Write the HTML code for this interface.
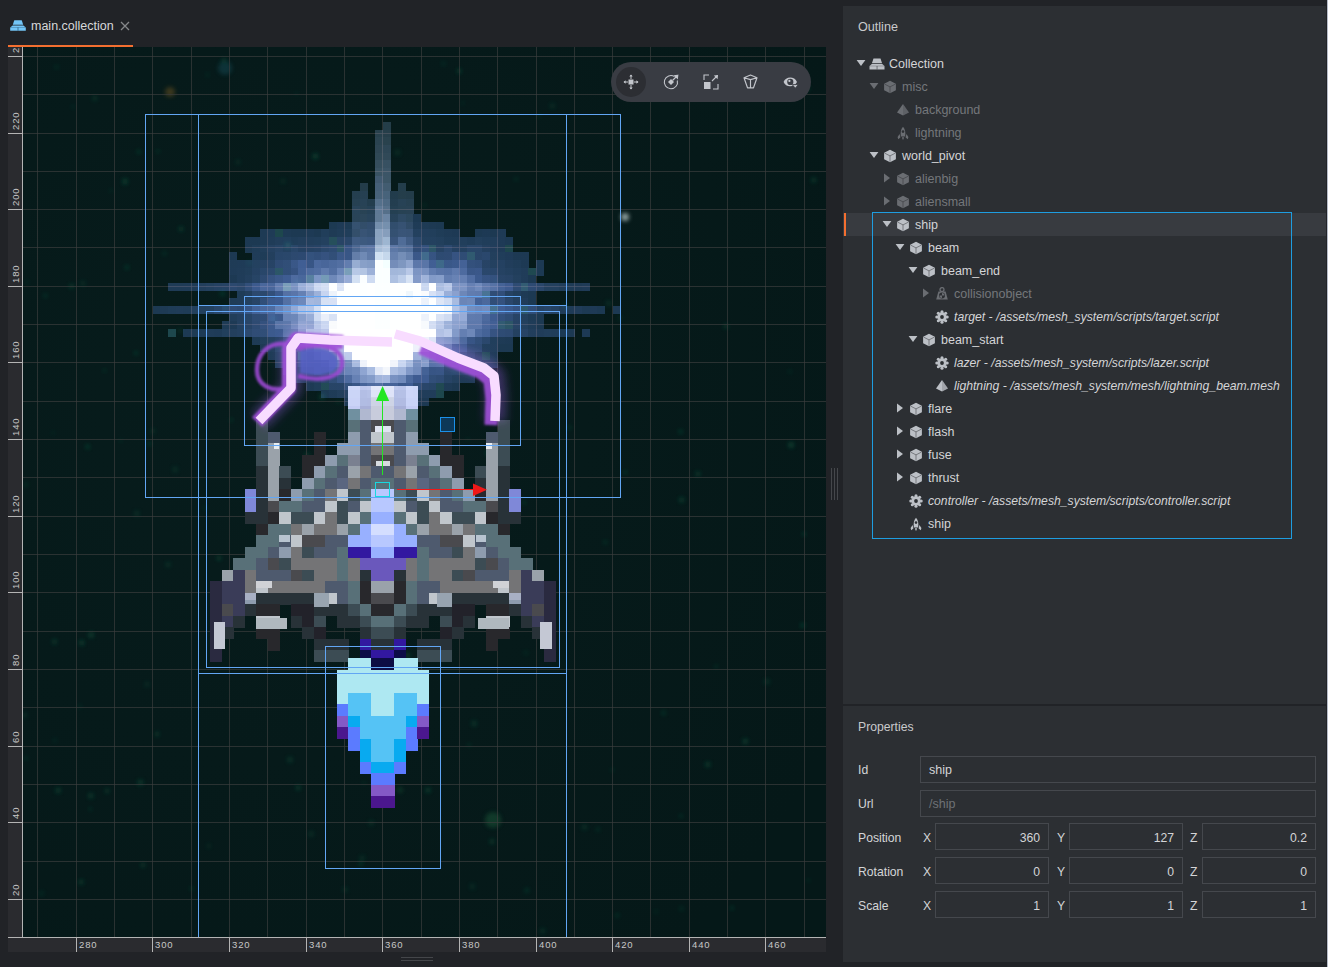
<!DOCTYPE html>
<html><head><meta charset="utf-8"><style>
*{box-sizing:border-box}
body{margin:0;width:1328px;height:967px;background:#212327;position:relative;overflow:hidden;font-family:"Liberation Sans",sans-serif}
.abs{position:absolute}
.t{position:absolute;white-space:nowrap;font-size:12.2px;line-height:14px}
</style></head><body>
<svg width="1328" height="967" viewBox="0 0 1328 967" style="position:absolute;left:0;top:0" shape-rendering="crispEdges"><defs><clipPath id="sc"><rect x="23" y="47" width="803" height="890"/></clipPath><radialGradient id="bg1" cx="0.3" cy="0.4" r="0.8"><stop offset="0" stop-color="#071c1c"/><stop offset="1" stop-color="#051818"/></radialGradient><clipPath id="rl"><rect x="8" y="47" width="14" height="890"/></clipPath><clipPath id="rb"><rect x="8" y="937" width="818" height="15"/></clipPath><filter id="blur1" x="-50%" y="-50%" width="200%" height="200%"><feGaussianBlur stdDeviation="1"/></filter><filter id="blur2" x="-50%" y="-50%" width="200%" height="200%"><feGaussianBlur stdDeviation="2"/></filter><filter id="blur4" x="-50%" y="-50%" width="200%" height="200%"><feGaussianBlur stdDeviation="4"/></filter></defs><rect x="8" y="47" width="818" height="905" fill="#2a2b2f"/><g clip-path="url(#sc)"><rect x="23" y="47" width="803" height="890" fill="url(#bg1)"/><circle cx="170" cy="92" r="5" fill="#a07020" opacity="0.35" filter="url(#blur2)" shape-rendering="auto"/><circle cx="225" cy="68" r="7" fill="#1a6070" opacity="0.35" filter="url(#blur2)" shape-rendering="auto"/><circle cx="625" cy="217" r="4" fill="#c8d8d8" opacity="0.7" filter="url(#blur2)" shape-rendering="auto"/><circle cx="493" cy="820" r="8" fill="#1a5a3a" opacity="0.5" filter="url(#blur2)" shape-rendering="auto"/><circle cx="400" cy="790" r="3" fill="#1a5a3a" opacity="0.4" filter="url(#blur2)" shape-rendering="auto"/><circle cx="283.0" cy="181.3" r="2.5" fill="#10503a" opacity="0.33" filter="url(#blur2)" shape-rendering="auto"/><circle cx="453.3" cy="372.5" r="1.6" fill="#10503a" opacity="0.50" filter="url(#blur2)" shape-rendering="auto"/><circle cx="53.1" cy="432.9" r="1.6" fill="#10503a" opacity="0.34" filter="url(#blur2)" shape-rendering="auto"/><circle cx="363.9" cy="782.9" r="1.7" fill="#10503a" opacity="0.39" filter="url(#blur2)" shape-rendering="auto"/><circle cx="526.8" cy="890.5" r="2.4" fill="#10503a" opacity="0.46" filter="url(#blur2)" shape-rendering="auto"/><circle cx="806.9" cy="88.5" r="2.8" fill="#10503a" opacity="0.42" filter="url(#blur2)" shape-rendering="auto"/><circle cx="138.8" cy="151.8" r="2.0" fill="#10503a" opacity="0.63" filter="url(#blur2)" shape-rendering="auto"/><circle cx="168.1" cy="564.6" r="2.5" fill="#10503a" opacity="0.45" filter="url(#blur2)" shape-rendering="auto"/><circle cx="462.8" cy="102.9" r="1.6" fill="#10503a" opacity="0.38" filter="url(#blur2)" shape-rendering="auto"/><circle cx="569.4" cy="427.6" r="2.0" fill="#10503a" opacity="0.53" filter="url(#blur2)" shape-rendering="auto"/><circle cx="386.9" cy="313.8" r="2.7" fill="#10503a" opacity="0.58" filter="url(#blur2)" shape-rendering="auto"/><circle cx="219.0" cy="558.2" r="2.3" fill="#10503a" opacity="0.65" filter="url(#blur2)" shape-rendering="auto"/><circle cx="608.7" cy="303.3" r="3.0" fill="#10503a" opacity="0.35" filter="url(#blur2)" shape-rendering="auto"/><circle cx="358.8" cy="720.9" r="1.7" fill="#10503a" opacity="0.50" filter="url(#blur2)" shape-rendering="auto"/><circle cx="54.5" cy="641.7" r="2.6" fill="#10503a" opacity="0.53" filter="url(#blur2)" shape-rendering="auto"/><circle cx="726.0" cy="326.2" r="2.5" fill="#10503a" opacity="0.54" filter="url(#blur2)" shape-rendering="auto"/><circle cx="488.7" cy="453.0" r="2.8" fill="#10503a" opacity="0.68" filter="url(#blur2)" shape-rendering="auto"/><circle cx="403.7" cy="638.1" r="1.6" fill="#10503a" opacity="0.58" filter="url(#blur2)" shape-rendering="auto"/><circle cx="542.6" cy="930.9" r="2.7" fill="#10503a" opacity="0.41" filter="url(#blur2)" shape-rendering="auto"/><circle cx="332.8" cy="642.1" r="1.5" fill="#10503a" opacity="0.48" filter="url(#blur2)" shape-rendering="auto"/><circle cx="157.9" cy="151.2" r="1.6" fill="#10503a" opacity="0.61" filter="url(#blur2)" shape-rendering="auto"/><circle cx="126.9" cy="267.4" r="2.1" fill="#10503a" opacity="0.65" filter="url(#blur2)" shape-rendering="auto"/><circle cx="87.7" cy="446.8" r="2.3" fill="#10503a" opacity="0.65" filter="url(#blur2)" shape-rendering="auto"/><circle cx="680.9" cy="815.9" r="1.9" fill="#10503a" opacity="0.47" filter="url(#blur2)" shape-rendering="auto"/><circle cx="311.1" cy="833.9" r="2.9" fill="#10503a" opacity="0.36" filter="url(#blur2)" shape-rendering="auto"/><circle cx="164.5" cy="253.4" r="1.9" fill="#10503a" opacity="0.49" filter="url(#blur2)" shape-rendering="auto"/><circle cx="496.1" cy="280.8" r="1.5" fill="#10503a" opacity="0.47" filter="url(#blur2)" shape-rendering="auto"/><circle cx="319.5" cy="551.0" r="2.9" fill="#10503a" opacity="0.58" filter="url(#blur2)" shape-rendering="auto"/><circle cx="436.9" cy="596.7" r="2.5" fill="#10503a" opacity="0.32" filter="url(#blur2)" shape-rendering="auto"/><circle cx="745.3" cy="741.2" r="2.8" fill="#10503a" opacity="0.62" filter="url(#blur2)" shape-rendering="auto"/><circle cx="338.1" cy="402.1" r="1.7" fill="#10503a" opacity="0.55" filter="url(#blur2)" shape-rendering="auto"/><circle cx="73.0" cy="106.9" r="1.8" fill="#10503a" opacity="0.36" filter="url(#blur2)" shape-rendering="auto"/><circle cx="296.1" cy="93.8" r="1.5" fill="#10503a" opacity="0.36" filter="url(#blur2)" shape-rendering="auto"/><circle cx="104.5" cy="370.6" r="1.5" fill="#10503a" opacity="0.65" filter="url(#blur2)" shape-rendering="auto"/><circle cx="516.1" cy="179.2" r="1.9" fill="#10503a" opacity="0.44" filter="url(#blur2)" shape-rendering="auto"/><circle cx="315.4" cy="156.3" r="2.8" fill="#10503a" opacity="0.70" filter="url(#blur2)" shape-rendering="auto"/><circle cx="397.2" cy="477.6" r="1.6" fill="#10503a" opacity="0.34" filter="url(#blur2)" shape-rendering="auto"/><circle cx="298.1" cy="282.6" r="2.7" fill="#10503a" opacity="0.36" filter="url(#blur2)" shape-rendering="auto"/><circle cx="41.5" cy="893.4" r="2.3" fill="#10503a" opacity="0.36" filter="url(#blur2)" shape-rendering="auto"/><circle cx="459.2" cy="71.1" r="2.3" fill="#10503a" opacity="0.69" filter="url(#blur2)" shape-rendering="auto"/><circle cx="716.2" cy="666.6" r="1.9" fill="#10503a" opacity="0.45" filter="url(#blur2)" shape-rendering="auto"/><circle cx="157.1" cy="734.0" r="2.3" fill="#10503a" opacity="0.61" filter="url(#blur2)" shape-rendering="auto"/><circle cx="287.7" cy="245.5" r="2.7" fill="#10503a" opacity="0.69" filter="url(#blur2)" shape-rendering="auto"/><circle cx="707.7" cy="764.4" r="2.7" fill="#10503a" opacity="0.60" filter="url(#blur2)" shape-rendering="auto"/><circle cx="205.1" cy="507.7" r="2.0" fill="#10503a" opacity="0.31" filter="url(#blur2)" shape-rendering="auto"/><circle cx="45.4" cy="295.7" r="1.9" fill="#10503a" opacity="0.58" filter="url(#blur2)" shape-rendering="auto"/><circle cx="791.1" cy="445.0" r="2.9" fill="#10503a" opacity="0.70" filter="url(#blur2)" shape-rendering="auto"/><circle cx="789.9" cy="371.5" r="1.8" fill="#10503a" opacity="0.39" filter="url(#blur2)" shape-rendering="auto"/><circle cx="181.0" cy="228.9" r="2.4" fill="#10503a" opacity="0.66" filter="url(#blur2)" shape-rendering="auto"/><circle cx="697.9" cy="473.7" r="2.5" fill="#10503a" opacity="0.62" filter="url(#blur2)" shape-rendering="auto"/><circle cx="91.1" cy="634.9" r="2.9" fill="#10503a" opacity="0.61" filter="url(#blur2)" shape-rendering="auto"/><circle cx="625.4" cy="472.4" r="1.8" fill="#10503a" opacity="0.62" filter="url(#blur2)" shape-rendering="auto"/><circle cx="290.0" cy="759.7" r="3.0" fill="#10503a" opacity="0.46" filter="url(#blur2)" shape-rendering="auto"/><circle cx="345.3" cy="889.6" r="2.6" fill="#10503a" opacity="0.37" filter="url(#blur2)" shape-rendering="auto"/><circle cx="125.0" cy="181.5" r="2.9" fill="#10503a" opacity="0.62" filter="url(#blur2)" shape-rendering="auto"/><circle cx="140.4" cy="782.6" r="3.0" fill="#10503a" opacity="0.56" filter="url(#blur2)" shape-rendering="auto"/><circle cx="304.4" cy="535.3" r="1.7" fill="#10503a" opacity="0.31" filter="url(#blur2)" shape-rendering="auto"/><circle cx="802.6" cy="625.2" r="2.3" fill="#10503a" opacity="0.67" filter="url(#blur2)" shape-rendering="auto"/><circle cx="371.3" cy="822.9" r="2.7" fill="#10503a" opacity="0.38" filter="url(#blur2)" shape-rendering="auto"/><circle cx="225.2" cy="307.7" r="1.9" fill="#10503a" opacity="0.53" filter="url(#blur2)" shape-rendering="auto"/><circle cx="231.3" cy="419.9" r="1.7" fill="#10503a" opacity="0.66" filter="url(#blur2)" shape-rendering="auto"/><circle cx="307.1" cy="454.8" r="2.4" fill="#10503a" opacity="0.66" filter="url(#blur2)" shape-rendering="auto"/><circle cx="360.8" cy="863.8" r="2.3" fill="#10503a" opacity="0.51" filter="url(#blur2)" shape-rendering="auto"/><circle cx="443.4" cy="63.6" r="2.2" fill="#10503a" opacity="0.37" filter="url(#blur2)" shape-rendering="auto"/><circle cx="26.2" cy="758.3" r="1.8" fill="#10503a" opacity="0.49" filter="url(#blur2)" shape-rendering="auto"/><circle cx="605.3" cy="542.3" r="2.0" fill="#10503a" opacity="0.51" filter="url(#blur2)" shape-rendering="auto"/><circle cx="469.0" cy="745.0" r="1.7" fill="#10503a" opacity="0.52" filter="url(#blur2)" shape-rendering="auto"/><circle cx="222.5" cy="293.5" r="2.7" fill="#10503a" opacity="0.50" filter="url(#blur2)" shape-rendering="auto"/><circle cx="474.1" cy="723.4" r="2.9" fill="#10503a" opacity="0.48" filter="url(#blur2)" shape-rendering="auto"/><circle cx="514.9" cy="496.9" r="2.3" fill="#10503a" opacity="0.58" filter="url(#blur2)" shape-rendering="auto"/><circle cx="386.2" cy="521.6" r="2.2" fill="#10503a" opacity="0.68" filter="url(#blur2)" shape-rendering="auto"/><circle cx="584.5" cy="827.1" r="2.9" fill="#10503a" opacity="0.40" filter="url(#blur2)" shape-rendering="auto"/><circle cx="472.3" cy="886.5" r="2.8" fill="#10503a" opacity="0.35" filter="url(#blur2)" shape-rendering="auto"/><circle cx="120.7" cy="440.5" r="1.6" fill="#10503a" opacity="0.40" filter="url(#blur2)" shape-rendering="auto"/><circle cx="81.7" cy="642.8" r="2.7" fill="#10503a" opacity="0.66" filter="url(#blur2)" shape-rendering="auto"/><circle cx="147.0" cy="684.3" r="2.5" fill="#10503a" opacity="0.36" filter="url(#blur2)" shape-rendering="auto"/><circle cx="731.9" cy="908.1" r="1.8" fill="#10503a" opacity="0.68" filter="url(#blur2)" shape-rendering="auto"/><circle cx="342.8" cy="480.7" r="3.0" fill="#10503a" opacity="0.63" filter="url(#blur2)" shape-rendering="auto"/><circle cx="152.7" cy="431.1" r="2.3" fill="#10503a" opacity="0.44" filter="url(#blur2)" shape-rendering="auto"/><circle cx="180.2" cy="330.5" r="2.6" fill="#10503a" opacity="0.31" filter="url(#blur2)" shape-rendering="auto"/><circle cx="467.9" cy="439.0" r="1.5" fill="#10503a" opacity="0.43" filter="url(#blur2)" shape-rendering="auto"/><circle cx="524.0" cy="502.9" r="1.6" fill="#10503a" opacity="0.69" filter="url(#blur2)" shape-rendering="auto"/><circle cx="656.1" cy="911.8" r="1.7" fill="#10503a" opacity="0.41" filter="url(#blur2)" shape-rendering="auto"/><circle cx="54.8" cy="740.3" r="1.9" fill="#10503a" opacity="0.35" filter="url(#blur2)" shape-rendering="auto"/><circle cx="362.1" cy="858.2" r="2.7" fill="#10503a" opacity="0.40" filter="url(#blur2)" shape-rendering="auto"/><circle cx="142.9" cy="865.1" r="2.4" fill="#10503a" opacity="0.58" filter="url(#blur2)" shape-rendering="auto"/><circle cx="94.8" cy="98.2" r="2.5" fill="#10503a" opacity="0.47" filter="url(#blur2)" shape-rendering="auto"/><circle cx="81.1" cy="882.1" r="2.5" fill="#10503a" opacity="0.62" filter="url(#blur2)" shape-rendering="auto"/><circle cx="90.2" cy="809.0" r="1.6" fill="#10503a" opacity="0.65" filter="url(#blur2)" shape-rendering="auto"/><circle cx="387.4" cy="348.8" r="2.3" fill="#10503a" opacity="0.67" filter="url(#blur2)" shape-rendering="auto"/><circle cx="238.1" cy="162.0" r="2.3" fill="#10503a" opacity="0.40" filter="url(#blur2)" shape-rendering="auto"/><circle cx="110.9" cy="190.7" r="1.6" fill="#10503a" opacity="0.38" filter="url(#blur2)" shape-rendering="auto"/><circle cx="273.5" cy="318.5" r="2.6" fill="#10503a" opacity="0.42" filter="url(#blur2)" shape-rendering="auto"/><circle cx="424.6" cy="205.3" r="2.0" fill="#10503a" opacity="0.31" filter="url(#blur2)" shape-rendering="auto"/><circle cx="224.1" cy="60.7" r="2.6" fill="#10503a" opacity="0.52" filter="url(#blur2)" shape-rendering="auto"/><circle cx="175.1" cy="469.5" r="2.9" fill="#10503a" opacity="0.34" filter="url(#blur2)" shape-rendering="auto"/><circle cx="680.6" cy="431.6" r="2.2" fill="#10503a" opacity="0.63" filter="url(#blur2)" shape-rendering="auto"/><circle cx="338.6" cy="498.0" r="2.5" fill="#10503a" opacity="0.69" filter="url(#blur2)" shape-rendering="auto"/><circle cx="298.2" cy="787.7" r="2.6" fill="#10503a" opacity="0.55" filter="url(#blur2)" shape-rendering="auto"/><circle cx="348.0" cy="356.3" r="1.6" fill="#10503a" opacity="0.35" filter="url(#blur2)" shape-rendering="auto"/><circle cx="79.8" cy="706.4" r="1.9" fill="#10503a" opacity="0.37" filter="url(#blur2)" shape-rendering="auto"/><circle cx="90.8" cy="795.7" r="2.8" fill="#10503a" opacity="0.57" filter="url(#blur2)" shape-rendering="auto"/><circle cx="249.4" cy="262.6" r="1.9" fill="#10503a" opacity="0.48" filter="url(#blur2)" shape-rendering="auto"/><circle cx="149.5" cy="443.8" r="1.9" fill="#10503a" opacity="0.68" filter="url(#blur2)" shape-rendering="auto"/><circle cx="804.0" cy="533.9" r="1.9" fill="#10503a" opacity="0.69" filter="url(#blur2)" shape-rendering="auto"/><circle cx="271.6" cy="364.4" r="1.5" fill="#10503a" opacity="0.45" filter="url(#blur2)" shape-rendering="auto"/><circle cx="404.1" cy="494.5" r="1.8" fill="#10503a" opacity="0.50" filter="url(#blur2)" shape-rendering="auto"/><circle cx="27.0" cy="282.1" r="1.6" fill="#10503a" opacity="0.46" filter="url(#blur2)" shape-rendering="auto"/><circle cx="56.5" cy="67.0" r="2.0" fill="#10503a" opacity="0.39" filter="url(#blur2)" shape-rendering="auto"/><circle cx="493.2" cy="518.0" r="2.6" fill="#10503a" opacity="0.56" filter="url(#blur2)" shape-rendering="auto"/><circle cx="597.9" cy="829.4" r="2.1" fill="#10503a" opacity="0.43" filter="url(#blur2)" shape-rendering="auto"/><circle cx="813.7" cy="180.0" r="2.6" fill="#10503a" opacity="0.56" filter="url(#blur2)" shape-rendering="auto"/><circle cx="58.2" cy="790.4" r="2.8" fill="#10503a" opacity="0.55" filter="url(#blur2)" shape-rendering="auto"/><circle cx="612.3" cy="769.9" r="1.7" fill="#10503a" opacity="0.51" filter="url(#blur2)" shape-rendering="auto"/><circle cx="428.0" cy="790.1" r="2.7" fill="#10503a" opacity="0.63" filter="url(#blur2)" shape-rendering="auto"/><circle cx="492.0" cy="841.6" r="2.5" fill="#10503a" opacity="0.58" filter="url(#blur2)" shape-rendering="auto"/><circle cx="207.6" cy="74.7" r="1.7" fill="#10503a" opacity="0.44" filter="url(#blur2)" shape-rendering="auto"/><circle cx="107.2" cy="790.9" r="2.3" fill="#10503a" opacity="0.55" filter="url(#blur2)" shape-rendering="auto"/><circle cx="525.9" cy="652.8" r="2.2" fill="#10503a" opacity="0.30" filter="url(#blur2)" shape-rendering="auto"/><circle cx="663.6" cy="713.0" r="2.3" fill="#10503a" opacity="0.51" filter="url(#blur2)" shape-rendering="auto"/><circle cx="552.4" cy="105.8" r="2.6" fill="#10503a" opacity="0.40" filter="url(#blur2)" shape-rendering="auto"/><circle cx="82.8" cy="283.3" r="2.6" fill="#10503a" opacity="0.38" filter="url(#blur2)" shape-rendering="auto"/><circle cx="617.1" cy="915.4" r="2.2" fill="#10503a" opacity="0.45" filter="url(#blur2)" shape-rendering="auto"/><circle cx="407.6" cy="655.5" r="2.7" fill="#10503a" opacity="0.55" filter="url(#blur2)" shape-rendering="auto"/><circle cx="539.1" cy="115.9" r="1.7" fill="#10503a" opacity="0.40" filter="url(#blur2)" shape-rendering="auto"/><circle cx="619.8" cy="317.9" r="2.4" fill="#10503a" opacity="0.30" filter="url(#blur2)" shape-rendering="auto"/><circle cx="71.7" cy="286.2" r="2.5" fill="#10503a" opacity="0.58" filter="url(#blur2)" shape-rendering="auto"/><circle cx="565.6" cy="305.9" r="2.3" fill="#10503a" opacity="0.49" filter="url(#blur2)" shape-rendering="auto"/><circle cx="397.5" cy="152.5" r="2.8" fill="#10503a" opacity="0.38" filter="url(#blur2)" shape-rendering="auto"/><circle cx="808.4" cy="880.3" r="1.5" fill="#10503a" opacity="0.48" filter="url(#blur2)" shape-rendering="auto"/><circle cx="681.4" cy="908.6" r="2.2" fill="#10503a" opacity="0.41" filter="url(#blur2)" shape-rendering="auto"/><circle cx="191.5" cy="888.6" r="1.8" fill="#10503a" opacity="0.53" filter="url(#blur2)" shape-rendering="auto"/><circle cx="136.8" cy="513.4" r="2.9" fill="#10503a" opacity="0.35" filter="url(#blur2)" shape-rendering="auto"/><circle cx="681.6" cy="499.8" r="2.8" fill="#10503a" opacity="0.58" filter="url(#blur2)" shape-rendering="auto"/><circle cx="208.8" cy="846.0" r="2.2" fill="#10503a" opacity="0.31" filter="url(#blur2)" shape-rendering="auto"/><circle cx="25.9" cy="484.6" r="2.2" fill="#10503a" opacity="0.42" filter="url(#blur2)" shape-rendering="auto"/><circle cx="136.0" cy="353.1" r="2.0" fill="#10503a" opacity="0.64" filter="url(#blur2)" shape-rendering="auto"/><circle cx="24.4" cy="715.2" r="2.8" fill="#10503a" opacity="0.35" filter="url(#blur2)" shape-rendering="auto"/><circle cx="766.9" cy="681.6" r="2.9" fill="#10503a" opacity="0.42" filter="url(#blur2)" shape-rendering="auto"/><circle cx="321.9" cy="396.7" r="3.0" fill="#10503a" opacity="0.54" filter="url(#blur2)" shape-rendering="auto"/><g><rect x="37" y="47" width="1" height="890" fill="#3c3e3e" opacity="0.68"/><rect x="76" y="47" width="1" height="890" fill="#3c3e3e" opacity="0.68"/><rect x="114" y="47" width="1" height="890" fill="#3c3e3e" opacity="0.68"/><rect x="152" y="47" width="1" height="890" fill="#3c3e3e" opacity="0.68"/><rect x="191" y="47" width="1" height="890" fill="#3c3e3e" opacity="0.68"/><rect x="229" y="47" width="1" height="890" fill="#3c3e3e" opacity="0.68"/><rect x="267" y="47" width="1" height="890" fill="#3c3e3e" opacity="0.68"/><rect x="306" y="47" width="1" height="890" fill="#3c3e3e" opacity="0.68"/><rect x="344" y="47" width="1" height="890" fill="#3c3e3e" opacity="0.68"/><rect x="382" y="47" width="1" height="890" fill="#3c3e3e" opacity="0.68"/><rect x="421" y="47" width="1" height="890" fill="#3c3e3e" opacity="0.68"/><rect x="459" y="47" width="1" height="890" fill="#3c3e3e" opacity="0.68"/><rect x="497" y="47" width="1" height="890" fill="#3c3e3e" opacity="0.68"/><rect x="536" y="47" width="1" height="890" fill="#3c3e3e" opacity="0.68"/><rect x="574" y="47" width="1" height="890" fill="#3c3e3e" opacity="0.68"/><rect x="612" y="47" width="1" height="890" fill="#3c3e3e" opacity="0.68"/><rect x="650" y="47" width="1" height="890" fill="#3c3e3e" opacity="0.68"/><rect x="689" y="47" width="1" height="890" fill="#3c3e3e" opacity="0.68"/><rect x="727" y="47" width="1" height="890" fill="#3c3e3e" opacity="0.68"/><rect x="765" y="47" width="1" height="890" fill="#3c3e3e" opacity="0.68"/><rect x="804" y="47" width="1" height="890" fill="#3c3e3e" opacity="0.68"/><rect x="23" y="899" width="803" height="1" fill="#3c3e3e" opacity="0.68"/><rect x="23" y="861" width="803" height="1" fill="#3c3e3e" opacity="0.68"/><rect x="23" y="822" width="803" height="1" fill="#3c3e3e" opacity="0.68"/><rect x="23" y="784" width="803" height="1" fill="#3c3e3e" opacity="0.68"/><rect x="23" y="746" width="803" height="1" fill="#3c3e3e" opacity="0.68"/><rect x="23" y="707" width="803" height="1" fill="#3c3e3e" opacity="0.68"/><rect x="23" y="669" width="803" height="1" fill="#3c3e3e" opacity="0.68"/><rect x="23" y="631" width="803" height="1" fill="#3c3e3e" opacity="0.68"/><rect x="23" y="592" width="803" height="1" fill="#3c3e3e" opacity="0.68"/><rect x="23" y="554" width="803" height="1" fill="#3c3e3e" opacity="0.68"/><rect x="23" y="516" width="803" height="1" fill="#3c3e3e" opacity="0.68"/><rect x="23" y="477" width="803" height="1" fill="#3c3e3e" opacity="0.68"/><rect x="23" y="439" width="803" height="1" fill="#3c3e3e" opacity="0.68"/><rect x="23" y="401" width="803" height="1" fill="#3c3e3e" opacity="0.68"/><rect x="23" y="362" width="803" height="1" fill="#3c3e3e" opacity="0.68"/><rect x="23" y="324" width="803" height="1" fill="#3c3e3e" opacity="0.68"/><rect x="23" y="286" width="803" height="1" fill="#3c3e3e" opacity="0.68"/><rect x="23" y="247" width="803" height="1" fill="#3c3e3e" opacity="0.68"/><rect x="23" y="209" width="803" height="1" fill="#3c3e3e" opacity="0.68"/><rect x="23" y="171" width="803" height="1" fill="#3c3e3e" opacity="0.68"/><rect x="23" y="133" width="803" height="1" fill="#3c3e3e" opacity="0.68"/><rect x="23" y="94" width="803" height="1" fill="#3c3e3e" opacity="0.68"/><rect x="23" y="56" width="803" height="1" fill="#3c3e3e" opacity="0.68"/></g><rect x="348.22" y="385.94" width="11.89" height="11.89" fill="#c4ccf4"/><rect x="359.71" y="385.94" width="11.89" height="11.89" fill="#a8b0d8"/><rect x="371.20" y="385.94" width="23.39" height="11.89" fill="#d8dcf4"/><rect x="394.19" y="385.94" width="11.89" height="11.89" fill="#a8b0d8"/><rect x="405.69" y="385.94" width="11.89" height="11.89" fill="#c4ccf4"/><rect x="348.22" y="397.44" width="11.89" height="11.89" fill="#c4ccf4"/><rect x="359.71" y="397.44" width="11.89" height="11.89" fill="#a8b0d8"/><rect x="371.20" y="397.44" width="23.39" height="11.89" fill="#c8ccdc"/><rect x="394.19" y="397.44" width="11.89" height="11.89" fill="#a8b0d8"/><rect x="405.69" y="397.44" width="11.89" height="11.89" fill="#c4ccf4"/><rect x="348.22" y="408.94" width="11.89" height="11.89" fill="#7090a0"/><rect x="359.71" y="408.94" width="11.89" height="11.89" fill="#b0b8d0"/><rect x="371.20" y="408.94" width="23.39" height="11.89" fill="#c8ccdc"/><rect x="394.19" y="408.94" width="11.89" height="11.89" fill="#b0b8d0"/><rect x="405.69" y="408.94" width="11.89" height="11.89" fill="#7090a0"/><rect x="256.25" y="420.43" width="11.89" height="11.89" fill="#3c4c54"/><rect x="348.22" y="420.43" width="11.89" height="11.89" fill="#587078"/><rect x="359.71" y="420.43" width="11.89" height="11.89" fill="#4e5a6e"/><rect x="371.20" y="420.43" width="23.39" height="11.89" fill="#4a4a4e"/><rect x="394.19" y="420.43" width="11.89" height="11.89" fill="#4e5a6e"/><rect x="405.69" y="420.43" width="11.89" height="11.89" fill="#587078"/><rect x="497.65" y="420.43" width="11.89" height="11.89" fill="#3c4c54"/><rect x="256.25" y="431.92" width="11.89" height="11.89" fill="#3c4c54"/><rect x="267.75" y="431.92" width="11.89" height="11.89" fill="#4e5a6e"/><rect x="313.73" y="431.92" width="11.89" height="11.89" fill="#28282c"/><rect x="348.22" y="431.92" width="11.89" height="11.89" fill="#8e9cae"/><rect x="359.71" y="431.92" width="11.89" height="11.89" fill="#4e5a6e"/><rect x="371.20" y="431.92" width="23.39" height="11.89" fill="#c0c6cc"/><rect x="394.19" y="431.92" width="11.89" height="11.89" fill="#4e5a6e"/><rect x="405.69" y="431.92" width="11.89" height="11.89" fill="#8e9cae"/><rect x="440.17" y="431.92" width="11.89" height="11.89" fill="#28282c"/><rect x="486.15" y="431.92" width="11.89" height="11.89" fill="#4e5a6e"/><rect x="497.65" y="431.92" width="11.89" height="11.89" fill="#3c4c54"/><rect x="256.25" y="443.42" width="11.89" height="11.89" fill="#3c4c54"/><rect x="267.75" y="443.42" width="11.89" height="11.89" fill="#9aa2aa"/><rect x="313.73" y="443.42" width="11.89" height="11.89" fill="#28282c"/><rect x="336.72" y="443.42" width="23.39" height="11.89" fill="#8e9cae"/><rect x="359.71" y="443.42" width="11.89" height="11.89" fill="#4e5a6e"/><rect x="371.20" y="443.42" width="23.39" height="11.89" fill="#747476"/><rect x="394.19" y="443.42" width="11.89" height="11.89" fill="#4e5a6e"/><rect x="405.69" y="443.42" width="23.39" height="11.89" fill="#8e9cae"/><rect x="440.17" y="443.42" width="11.89" height="11.89" fill="#28282c"/><rect x="486.15" y="443.42" width="11.89" height="11.89" fill="#9aa2aa"/><rect x="497.65" y="443.42" width="11.89" height="11.89" fill="#3c4c54"/><rect x="256.25" y="454.91" width="11.89" height="11.89" fill="#3c4c54"/><rect x="267.75" y="454.91" width="11.89" height="11.89" fill="#9aa2aa"/><rect x="302.24" y="454.91" width="23.39" height="11.89" fill="#28282c"/><rect x="325.23" y="454.91" width="11.89" height="11.89" fill="#8e9cae"/><rect x="336.72" y="454.91" width="11.89" height="11.89" fill="#587078"/><rect x="348.22" y="454.91" width="11.89" height="11.89" fill="#7a8090"/><rect x="359.71" y="454.91" width="11.89" height="11.89" fill="#4e5a6e"/><rect x="371.20" y="454.91" width="23.39" height="11.89" fill="#4a4a4e"/><rect x="394.19" y="454.91" width="11.89" height="11.89" fill="#4e5a6e"/><rect x="405.69" y="454.91" width="11.89" height="11.89" fill="#7a8090"/><rect x="417.19" y="454.91" width="11.89" height="11.89" fill="#587078"/><rect x="428.68" y="454.91" width="11.89" height="11.89" fill="#8e9cae"/><rect x="440.17" y="454.91" width="23.39" height="11.89" fill="#28282c"/><rect x="486.15" y="454.91" width="11.89" height="11.89" fill="#9aa2aa"/><rect x="497.65" y="454.91" width="11.89" height="11.89" fill="#3c4c54"/><rect x="256.25" y="466.41" width="11.89" height="11.89" fill="#283238"/><rect x="267.75" y="466.41" width="11.89" height="11.89" fill="#9aa2aa"/><rect x="279.25" y="466.41" width="11.89" height="11.89" fill="#3c4c54"/><rect x="302.24" y="466.41" width="11.89" height="11.89" fill="#28282c"/><rect x="313.73" y="466.41" width="11.89" height="11.89" fill="#8e9cae"/><rect x="325.23" y="466.41" width="11.89" height="11.89" fill="#587078"/><rect x="336.72" y="466.41" width="11.89" height="11.89" fill="#4e5a6e"/><rect x="348.22" y="466.41" width="11.89" height="11.89" fill="#9aa2aa"/><rect x="359.71" y="466.41" width="11.89" height="11.89" fill="#747476"/><rect x="371.20" y="466.41" width="23.39" height="11.89" fill="#4e5a6e"/><rect x="394.19" y="466.41" width="11.89" height="11.89" fill="#747476"/><rect x="405.69" y="466.41" width="11.89" height="11.89" fill="#9aa2aa"/><rect x="417.19" y="466.41" width="11.89" height="11.89" fill="#4e5a6e"/><rect x="428.68" y="466.41" width="11.89" height="11.89" fill="#587078"/><rect x="440.17" y="466.41" width="11.89" height="11.89" fill="#8e9cae"/><rect x="451.67" y="466.41" width="11.89" height="11.89" fill="#28282c"/><rect x="474.66" y="466.41" width="11.89" height="11.89" fill="#3c4c54"/><rect x="486.15" y="466.41" width="11.89" height="11.89" fill="#9aa2aa"/><rect x="497.65" y="466.41" width="11.89" height="11.89" fill="#283238"/><rect x="256.25" y="477.90" width="11.89" height="11.89" fill="#283238"/><rect x="267.75" y="477.90" width="11.89" height="11.89" fill="#9aa2aa"/><rect x="279.25" y="477.90" width="11.89" height="11.89" fill="#283238"/><rect x="302.24" y="477.90" width="11.89" height="11.89" fill="#8e9cae"/><rect x="313.73" y="477.90" width="11.89" height="11.89" fill="#587078"/><rect x="325.23" y="477.90" width="11.89" height="11.89" fill="#4e5a6e"/><rect x="336.72" y="477.90" width="11.89" height="11.89" fill="#5a6680"/><rect x="348.22" y="477.90" width="11.89" height="11.89" fill="#747476"/><rect x="359.71" y="477.90" width="11.89" height="11.89" fill="#4e5a6e"/><rect x="371.20" y="477.90" width="23.39" height="11.89" fill="#587078"/><rect x="394.19" y="477.90" width="11.89" height="11.89" fill="#4e5a6e"/><rect x="405.69" y="477.90" width="11.89" height="11.89" fill="#747476"/><rect x="417.19" y="477.90" width="11.89" height="11.89" fill="#5a6680"/><rect x="428.68" y="477.90" width="11.89" height="11.89" fill="#4e5a6e"/><rect x="440.17" y="477.90" width="11.89" height="11.89" fill="#587078"/><rect x="451.67" y="477.90" width="11.89" height="11.89" fill="#8e9cae"/><rect x="474.66" y="477.90" width="11.89" height="11.89" fill="#283238"/><rect x="486.15" y="477.90" width="11.89" height="11.89" fill="#9aa2aa"/><rect x="497.65" y="477.90" width="11.89" height="11.89" fill="#283238"/><rect x="244.76" y="489.40" width="11.89" height="11.89" fill="#7f88d8"/><rect x="256.25" y="489.40" width="11.89" height="11.89" fill="#283238"/><rect x="267.75" y="489.40" width="11.89" height="11.89" fill="#9aa2aa"/><rect x="279.25" y="489.40" width="11.89" height="11.89" fill="#28282c"/><rect x="290.74" y="489.40" width="11.89" height="11.89" fill="#8e9cae"/><rect x="302.24" y="489.40" width="11.89" height="11.89" fill="#587078"/><rect x="313.73" y="489.40" width="11.89" height="11.89" fill="#4e5a6e"/><rect x="325.23" y="489.40" width="11.89" height="11.89" fill="#747476"/><rect x="336.72" y="489.40" width="11.89" height="11.89" fill="#c0c6cc"/><rect x="348.22" y="489.40" width="11.89" height="11.89" fill="#3c4c54"/><rect x="359.71" y="489.40" width="11.89" height="11.89" fill="#587078"/><rect x="371.20" y="489.40" width="23.39" height="11.89" fill="#b8c8ff"/><rect x="394.19" y="489.40" width="11.89" height="11.89" fill="#587078"/><rect x="405.69" y="489.40" width="11.89" height="11.89" fill="#3c4c54"/><rect x="417.19" y="489.40" width="11.89" height="11.89" fill="#c0c6cc"/><rect x="428.68" y="489.40" width="11.89" height="11.89" fill="#747476"/><rect x="440.17" y="489.40" width="11.89" height="11.89" fill="#4e5a6e"/><rect x="451.67" y="489.40" width="11.89" height="11.89" fill="#587078"/><rect x="463.16" y="489.40" width="11.89" height="11.89" fill="#8e9cae"/><rect x="474.66" y="489.40" width="11.89" height="11.89" fill="#28282c"/><rect x="486.15" y="489.40" width="11.89" height="11.89" fill="#9aa2aa"/><rect x="497.65" y="489.40" width="11.89" height="11.89" fill="#283238"/><rect x="509.14" y="489.40" width="11.89" height="11.89" fill="#7f88d8"/><rect x="244.76" y="500.89" width="11.89" height="11.89" fill="#7f88d8"/><rect x="256.25" y="500.89" width="11.89" height="11.89" fill="#283238"/><rect x="267.75" y="500.89" width="11.89" height="11.89" fill="#4a4a4e"/><rect x="279.25" y="500.89" width="23.39" height="11.89" fill="#587078"/><rect x="302.24" y="500.89" width="23.39" height="11.89" fill="#4e5a6e"/><rect x="325.23" y="500.89" width="11.89" height="11.89" fill="#c0c6cc"/><rect x="336.72" y="500.89" width="11.89" height="11.89" fill="#3c4c54"/><rect x="348.22" y="500.89" width="11.89" height="11.89" fill="#4e5a6e"/><rect x="359.71" y="500.89" width="11.89" height="11.89" fill="#c0c6cc"/><rect x="371.20" y="500.89" width="23.39" height="11.89" fill="#b8c8ff"/><rect x="394.19" y="500.89" width="11.89" height="11.89" fill="#c0c6cc"/><rect x="405.69" y="500.89" width="11.89" height="11.89" fill="#4e5a6e"/><rect x="417.19" y="500.89" width="11.89" height="11.89" fill="#3c4c54"/><rect x="428.68" y="500.89" width="11.89" height="11.89" fill="#c0c6cc"/><rect x="440.17" y="500.89" width="23.39" height="11.89" fill="#4e5a6e"/><rect x="463.16" y="500.89" width="23.39" height="11.89" fill="#587078"/><rect x="486.15" y="500.89" width="11.89" height="11.89" fill="#4a4a4e"/><rect x="497.65" y="500.89" width="11.89" height="11.89" fill="#283238"/><rect x="509.14" y="500.89" width="11.89" height="11.89" fill="#7f88d8"/><rect x="244.76" y="512.39" width="23.39" height="11.89" fill="#283238"/><rect x="267.75" y="512.39" width="11.89" height="11.89" fill="#28282c"/><rect x="279.25" y="512.39" width="11.89" height="11.89" fill="#c0c6cc"/><rect x="290.74" y="512.39" width="23.39" height="11.89" fill="#3c4c54"/><rect x="313.73" y="512.39" width="11.89" height="11.89" fill="#c0c6cc"/><rect x="325.23" y="512.39" width="11.89" height="11.89" fill="#747476"/><rect x="336.72" y="512.39" width="11.89" height="11.89" fill="#3c4c54"/><rect x="348.22" y="512.39" width="11.89" height="11.89" fill="#c0c6cc"/><rect x="359.71" y="512.39" width="11.89" height="11.89" fill="#587078"/><rect x="371.20" y="512.39" width="23.39" height="11.89" fill="#98b0ff"/><rect x="394.19" y="512.39" width="11.89" height="11.89" fill="#587078"/><rect x="405.69" y="512.39" width="11.89" height="11.89" fill="#c0c6cc"/><rect x="417.19" y="512.39" width="11.89" height="11.89" fill="#3c4c54"/><rect x="428.68" y="512.39" width="11.89" height="11.89" fill="#747476"/><rect x="440.17" y="512.39" width="11.89" height="11.89" fill="#c0c6cc"/><rect x="451.67" y="512.39" width="23.39" height="11.89" fill="#3c4c54"/><rect x="474.66" y="512.39" width="11.89" height="11.89" fill="#c0c6cc"/><rect x="486.15" y="512.39" width="11.89" height="11.89" fill="#28282c"/><rect x="497.65" y="512.39" width="23.39" height="11.89" fill="#283238"/><rect x="256.25" y="523.88" width="11.89" height="11.89" fill="#28282c"/><rect x="267.75" y="523.88" width="23.39" height="11.89" fill="#587078"/><rect x="290.74" y="523.88" width="11.89" height="11.89" fill="#747476"/><rect x="302.24" y="523.88" width="11.89" height="11.89" fill="#9aa2aa"/><rect x="313.73" y="523.88" width="23.39" height="11.89" fill="#747476"/><rect x="336.72" y="523.88" width="11.89" height="11.89" fill="#9aa2aa"/><rect x="348.22" y="523.88" width="11.89" height="11.89" fill="#587078"/><rect x="359.71" y="523.88" width="11.89" height="11.89" fill="#98b0ff"/><rect x="371.20" y="523.88" width="23.39" height="11.89" fill="#d4deff"/><rect x="394.19" y="523.88" width="11.89" height="11.89" fill="#98b0ff"/><rect x="405.69" y="523.88" width="11.89" height="11.89" fill="#587078"/><rect x="417.19" y="523.88" width="11.89" height="11.89" fill="#9aa2aa"/><rect x="428.68" y="523.88" width="23.39" height="11.89" fill="#747476"/><rect x="451.67" y="523.88" width="11.89" height="11.89" fill="#9aa2aa"/><rect x="463.16" y="523.88" width="11.89" height="11.89" fill="#747476"/><rect x="474.66" y="523.88" width="23.39" height="11.89" fill="#587078"/><rect x="497.65" y="523.88" width="11.89" height="11.89" fill="#28282c"/><rect x="256.25" y="535.38" width="23.39" height="11.89" fill="#587078"/><rect x="279.25" y="535.38" width="11.89" height="11.89" fill="#4e5a6e"/><rect x="290.74" y="535.38" width="11.89" height="11.89" fill="#c0c6cc"/><rect x="302.24" y="535.38" width="23.39" height="11.89" fill="#4a4a4e"/><rect x="325.23" y="535.38" width="23.39" height="11.89" fill="#4e5a6e"/><rect x="348.22" y="535.38" width="23.39" height="11.89" fill="#98b0ff"/><rect x="371.20" y="535.38" width="23.39" height="11.89" fill="#b8c8ff"/><rect x="394.19" y="535.38" width="23.39" height="11.89" fill="#98b0ff"/><rect x="417.19" y="535.38" width="23.39" height="11.89" fill="#4e5a6e"/><rect x="440.17" y="535.38" width="23.39" height="11.89" fill="#4a4a4e"/><rect x="463.16" y="535.38" width="11.89" height="11.89" fill="#c0c6cc"/><rect x="474.66" y="535.38" width="11.89" height="11.89" fill="#4e5a6e"/><rect x="486.15" y="535.38" width="23.39" height="11.89" fill="#587078"/><rect x="244.76" y="546.88" width="23.39" height="11.89" fill="#587078"/><rect x="267.75" y="546.88" width="11.89" height="11.89" fill="#4e5a6e"/><rect x="279.25" y="546.88" width="11.89" height="11.89" fill="#8e9cae"/><rect x="290.74" y="546.88" width="11.89" height="11.89" fill="#747476"/><rect x="302.24" y="546.88" width="11.89" height="11.89" fill="#3c4c54"/><rect x="313.73" y="546.88" width="23.39" height="11.89" fill="#4e5a6e"/><rect x="336.72" y="546.88" width="11.89" height="11.89" fill="#587078"/><rect x="348.22" y="546.88" width="23.39" height="11.89" fill="#3218a0"/><rect x="371.20" y="546.88" width="23.39" height="11.89" fill="#98b0ff"/><rect x="394.19" y="546.88" width="23.39" height="11.89" fill="#3218a0"/><rect x="417.19" y="546.88" width="11.89" height="11.89" fill="#587078"/><rect x="428.68" y="546.88" width="23.39" height="11.89" fill="#4e5a6e"/><rect x="451.67" y="546.88" width="11.89" height="11.89" fill="#3c4c54"/><rect x="463.16" y="546.88" width="11.89" height="11.89" fill="#747476"/><rect x="474.66" y="546.88" width="11.89" height="11.89" fill="#8e9cae"/><rect x="486.15" y="546.88" width="11.89" height="11.89" fill="#4e5a6e"/><rect x="497.65" y="546.88" width="23.39" height="11.89" fill="#587078"/><rect x="233.27" y="558.37" width="23.39" height="11.89" fill="#587078"/><rect x="256.25" y="558.37" width="11.89" height="11.89" fill="#4e5a6e"/><rect x="267.75" y="558.37" width="11.89" height="11.89" fill="#4a4a4e"/><rect x="279.25" y="558.37" width="11.89" height="11.89" fill="#3c4c54"/><rect x="290.74" y="558.37" width="46.38" height="11.89" fill="#747476"/><rect x="336.72" y="558.37" width="11.89" height="11.89" fill="#587078"/><rect x="348.22" y="558.37" width="11.89" height="11.89" fill="#747476"/><rect x="359.71" y="558.37" width="46.38" height="11.89" fill="#6a58bc"/><rect x="405.69" y="558.37" width="11.89" height="11.89" fill="#747476"/><rect x="417.19" y="558.37" width="11.89" height="11.89" fill="#587078"/><rect x="428.68" y="558.37" width="46.38" height="11.89" fill="#747476"/><rect x="474.66" y="558.37" width="11.89" height="11.89" fill="#3c4c54"/><rect x="486.15" y="558.37" width="11.89" height="11.89" fill="#4a4a4e"/><rect x="497.65" y="558.37" width="11.89" height="11.89" fill="#4e5a6e"/><rect x="509.14" y="558.37" width="23.39" height="11.89" fill="#587078"/><rect x="221.77" y="569.87" width="11.89" height="11.89" fill="#9aa2aa"/><rect x="233.27" y="569.87" width="11.89" height="11.89" fill="#3a3c58"/><rect x="244.76" y="569.87" width="11.89" height="11.89" fill="#747476"/><rect x="256.25" y="569.87" width="34.88" height="11.89" fill="#4e5a6e"/><rect x="290.74" y="569.87" width="11.89" height="11.89" fill="#4a4a4e"/><rect x="302.24" y="569.87" width="11.89" height="11.89" fill="#3c4c54"/><rect x="313.73" y="569.87" width="23.39" height="11.89" fill="#747476"/><rect x="336.72" y="569.87" width="11.89" height="11.89" fill="#587078"/><rect x="348.22" y="569.87" width="11.89" height="11.89" fill="#747476"/><rect x="359.71" y="569.87" width="11.89" height="11.89" fill="#283238"/><rect x="371.20" y="569.87" width="23.39" height="11.89" fill="#6a58bc"/><rect x="394.19" y="569.87" width="11.89" height="11.89" fill="#283238"/><rect x="405.69" y="569.87" width="11.89" height="11.89" fill="#747476"/><rect x="417.19" y="569.87" width="11.89" height="11.89" fill="#587078"/><rect x="428.68" y="569.87" width="23.39" height="11.89" fill="#747476"/><rect x="451.67" y="569.87" width="11.89" height="11.89" fill="#3c4c54"/><rect x="463.16" y="569.87" width="11.89" height="11.89" fill="#4a4a4e"/><rect x="474.66" y="569.87" width="34.88" height="11.89" fill="#4e5a6e"/><rect x="509.14" y="569.87" width="11.89" height="11.89" fill="#747476"/><rect x="520.64" y="569.87" width="11.89" height="11.89" fill="#3a3c58"/><rect x="532.13" y="569.87" width="11.89" height="11.89" fill="#9aa2aa"/><rect x="210.28" y="581.36" width="11.89" height="11.89" fill="#2a2a40"/><rect x="221.77" y="581.36" width="23.39" height="11.89" fill="#3a3c58"/><rect x="244.76" y="581.36" width="11.89" height="11.89" fill="#747476"/><rect x="256.25" y="581.36" width="11.89" height="11.89" fill="#c0c6cc"/><rect x="267.75" y="581.36" width="57.87" height="11.89" fill="#747476"/><rect x="325.23" y="581.36" width="23.39" height="11.89" fill="#4e5a6e"/><rect x="348.22" y="581.36" width="11.89" height="11.89" fill="#587078"/><rect x="359.71" y="581.36" width="11.89" height="11.89" fill="#28282c"/><rect x="371.20" y="581.36" width="23.39" height="11.89" fill="#9aa2aa"/><rect x="394.19" y="581.36" width="11.89" height="11.89" fill="#28282c"/><rect x="405.69" y="581.36" width="11.89" height="11.89" fill="#587078"/><rect x="417.19" y="581.36" width="23.39" height="11.89" fill="#4e5a6e"/><rect x="440.17" y="581.36" width="57.87" height="11.89" fill="#747476"/><rect x="497.65" y="581.36" width="11.89" height="11.89" fill="#c0c6cc"/><rect x="509.14" y="581.36" width="11.89" height="11.89" fill="#747476"/><rect x="520.64" y="581.36" width="23.39" height="11.89" fill="#3a3c58"/><rect x="543.63" y="581.36" width="11.89" height="11.89" fill="#2a2a40"/><rect x="210.28" y="592.86" width="11.89" height="11.89" fill="#2a2a40"/><rect x="221.77" y="592.86" width="23.39" height="11.89" fill="#3a3c58"/><rect x="244.76" y="592.86" width="11.89" height="11.89" fill="#8e9cae"/><rect x="256.25" y="592.86" width="57.87" height="11.89" fill="#283238"/><rect x="313.73" y="592.86" width="11.89" height="11.89" fill="#8e9cae"/><rect x="325.23" y="592.86" width="11.89" height="11.89" fill="#c0c6cc"/><rect x="336.72" y="592.86" width="11.89" height="11.89" fill="#4e5a6e"/><rect x="348.22" y="592.86" width="11.89" height="11.89" fill="#587078"/><rect x="359.71" y="592.86" width="11.89" height="11.89" fill="#28282c"/><rect x="371.20" y="592.86" width="23.39" height="11.89" fill="#4a4a4e"/><rect x="394.19" y="592.86" width="11.89" height="11.89" fill="#28282c"/><rect x="405.69" y="592.86" width="11.89" height="11.89" fill="#587078"/><rect x="417.19" y="592.86" width="11.89" height="11.89" fill="#4e5a6e"/><rect x="428.68" y="592.86" width="11.89" height="11.89" fill="#c0c6cc"/><rect x="440.17" y="592.86" width="11.89" height="11.89" fill="#8e9cae"/><rect x="451.67" y="592.86" width="57.87" height="11.89" fill="#283238"/><rect x="509.14" y="592.86" width="11.89" height="11.89" fill="#8e9cae"/><rect x="520.64" y="592.86" width="23.39" height="11.89" fill="#3a3c58"/><rect x="543.63" y="592.86" width="11.89" height="11.89" fill="#2a2a40"/><rect x="210.28" y="604.35" width="11.89" height="11.89" fill="#2a2a40"/><rect x="221.77" y="604.35" width="11.89" height="11.89" fill="#4a4a4e"/><rect x="233.27" y="604.35" width="11.89" height="11.89" fill="#3a3c58"/><rect x="244.76" y="604.35" width="11.89" height="11.89" fill="#283238"/><rect x="256.25" y="604.35" width="23.39" height="11.89" fill="#28282c"/><rect x="290.74" y="604.35" width="23.39" height="11.89" fill="#22222a"/><rect x="313.73" y="604.35" width="34.88" height="11.89" fill="#283238"/><rect x="348.22" y="604.35" width="11.89" height="11.89" fill="#3c4c54"/><rect x="359.71" y="604.35" width="11.89" height="11.89" fill="#587078"/><rect x="371.20" y="604.35" width="23.39" height="11.89" fill="#28282c"/><rect x="394.19" y="604.35" width="11.89" height="11.89" fill="#587078"/><rect x="405.69" y="604.35" width="11.89" height="11.89" fill="#3c4c54"/><rect x="417.19" y="604.35" width="34.88" height="11.89" fill="#283238"/><rect x="451.67" y="604.35" width="23.39" height="11.89" fill="#22222a"/><rect x="486.15" y="604.35" width="23.39" height="11.89" fill="#28282c"/><rect x="509.14" y="604.35" width="11.89" height="11.89" fill="#283238"/><rect x="520.64" y="604.35" width="11.89" height="11.89" fill="#3a3c58"/><rect x="532.13" y="604.35" width="11.89" height="11.89" fill="#4a4a4e"/><rect x="543.63" y="604.35" width="11.89" height="11.89" fill="#2a2a40"/><rect x="210.28" y="615.85" width="11.89" height="11.89" fill="#2a2a40"/><rect x="221.77" y="615.85" width="11.89" height="11.89" fill="#3a3c58"/><rect x="233.27" y="615.85" width="11.89" height="11.89" fill="#283238"/><rect x="256.25" y="615.85" width="23.39" height="11.89" fill="#c0c6cc"/><rect x="290.74" y="615.85" width="11.89" height="11.89" fill="#283238"/><rect x="302.24" y="615.85" width="11.89" height="11.89" fill="#22222a"/><rect x="313.73" y="615.85" width="11.89" height="11.89" fill="#3c4c54"/><rect x="336.72" y="615.85" width="23.39" height="11.89" fill="#283238"/><rect x="359.71" y="615.85" width="11.89" height="11.89" fill="#3c4c54"/><rect x="371.20" y="615.85" width="23.39" height="11.89" fill="#587078"/><rect x="394.19" y="615.85" width="11.89" height="11.89" fill="#3c4c54"/><rect x="405.69" y="615.85" width="23.39" height="11.89" fill="#283238"/><rect x="440.17" y="615.85" width="11.89" height="11.89" fill="#3c4c54"/><rect x="451.67" y="615.85" width="11.89" height="11.89" fill="#22222a"/><rect x="463.16" y="615.85" width="11.89" height="11.89" fill="#283238"/><rect x="486.15" y="615.85" width="23.39" height="11.89" fill="#c0c6cc"/><rect x="520.64" y="615.85" width="11.89" height="11.89" fill="#283238"/><rect x="532.13" y="615.85" width="11.89" height="11.89" fill="#3a3c58"/><rect x="543.63" y="615.85" width="11.89" height="11.89" fill="#2a2a40"/><rect x="210.28" y="627.34" width="11.89" height="11.89" fill="#2a2a40"/><rect x="221.77" y="627.34" width="11.89" height="11.89" fill="#283238"/><rect x="256.25" y="627.34" width="23.39" height="11.89" fill="#28282c"/><rect x="302.24" y="627.34" width="11.89" height="11.89" fill="#283238"/><rect x="313.73" y="627.34" width="11.89" height="11.89" fill="#22222a"/><rect x="359.71" y="627.34" width="11.89" height="11.89" fill="#283238"/><rect x="371.20" y="627.34" width="23.39" height="11.89" fill="#3c4c54"/><rect x="394.19" y="627.34" width="11.89" height="11.89" fill="#283238"/><rect x="440.17" y="627.34" width="11.89" height="11.89" fill="#22222a"/><rect x="451.67" y="627.34" width="11.89" height="11.89" fill="#283238"/><rect x="486.15" y="627.34" width="23.39" height="11.89" fill="#28282c"/><rect x="532.13" y="627.34" width="11.89" height="11.89" fill="#283238"/><rect x="543.63" y="627.34" width="11.89" height="11.89" fill="#2a2a40"/><rect x="210.28" y="638.84" width="11.89" height="11.89" fill="#2a2a40"/><rect x="267.75" y="638.84" width="11.89" height="11.89" fill="#28282c"/><rect x="313.73" y="638.84" width="34.88" height="11.89" fill="#283238"/><rect x="359.71" y="638.84" width="11.89" height="11.89" fill="#3218a0"/><rect x="371.20" y="638.84" width="23.39" height="11.89" fill="#283238"/><rect x="394.19" y="638.84" width="11.89" height="11.89" fill="#3218a0"/><rect x="417.19" y="638.84" width="34.88" height="11.89" fill="#283238"/><rect x="486.15" y="638.84" width="11.89" height="11.89" fill="#28282c"/><rect x="543.63" y="638.84" width="11.89" height="11.89" fill="#2a2a40"/><rect x="210.28" y="650.33" width="11.89" height="11.89" fill="#2a2a40"/><rect x="313.73" y="650.33" width="34.88" height="11.89" fill="#3c4c54"/><rect x="359.71" y="650.33" width="11.89" height="11.89" fill="#0c0c48"/><rect x="371.20" y="650.33" width="23.39" height="11.89" fill="#3218a0"/><rect x="394.19" y="650.33" width="11.89" height="11.89" fill="#0c0c48"/><rect x="417.19" y="650.33" width="34.88" height="11.89" fill="#3c4c54"/><rect x="543.63" y="650.33" width="11.89" height="11.89" fill="#2a2a40"/><rect x="273.50" y="443.42" width="5.75" height="5.75" fill="#e8ecf0"/><rect x="486.15" y="443.42" width="5.75" height="5.75" fill="#e8ecf0"/><rect x="374.65" y="426.18" width="16.09" height="5.75" fill="#e0e4f0"/><rect x="374.65" y="426.18" width="16.09" height="5.75" fill="#e0e4f0"/><rect x="375.80" y="460.66" width="13.79" height="5.75" fill="#d8dce0"/><rect x="375.80" y="460.66" width="13.79" height="5.75" fill="#d8dce0"/><rect x="279.25" y="535.38" width="10.35" height="6.32" fill="#b8c4d0"/><rect x="475.81" y="535.38" width="10.35" height="6.32" fill="#b8c4d0"/><rect x="256.25" y="581.36" width="16.09" height="6.90" fill="#d0d2d6"/><rect x="493.05" y="581.36" width="16.09" height="6.90" fill="#d0d2d6"/><rect x="213.72" y="621.59" width="11.49" height="27.59" fill="#c4c8d4"/><rect x="540.18" y="621.59" width="11.49" height="27.59" fill="#c4c8d4"/><rect x="256.25" y="618.14" width="31.04" height="10.92" fill="#b0b8be"/><rect x="478.11" y="618.14" width="31.04" height="10.92" fill="#b0b8be"/><rect x="244.76" y="592.86" width="11.49" height="7.47" fill="#a8b0c4"/><rect x="509.14" y="592.86" width="11.49" height="7.47" fill="#a8b0c4"/><rect x="313.73" y="592.86" width="14.94" height="13.79" fill="#98a4b0"/><rect x="436.73" y="592.86" width="14.94" height="13.79" fill="#98a4b0"/><rect x="348.19" y="658.30" width="11.89" height="11.89" fill="#aee8f2"/><rect x="359.69" y="658.30" width="11.89" height="11.89" fill="#aee8f2"/><rect x="371.19" y="658.30" width="11.89" height="11.89" fill="#0c0c44"/><rect x="382.68" y="658.30" width="11.89" height="11.89" fill="#0c0c44"/><rect x="394.17" y="658.30" width="11.89" height="11.89" fill="#aee8f2"/><rect x="405.67" y="658.30" width="11.89" height="11.89" fill="#aee8f2"/><rect x="336.70" y="669.79" width="11.89" height="11.89" fill="#aee8f2"/><rect x="348.19" y="669.79" width="11.89" height="11.89" fill="#aee8f2"/><rect x="359.69" y="669.79" width="11.89" height="11.89" fill="#aee8f2"/><rect x="371.19" y="669.79" width="11.89" height="11.89" fill="#aee8f2"/><rect x="382.68" y="669.79" width="11.89" height="11.89" fill="#aee8f2"/><rect x="394.17" y="669.79" width="11.89" height="11.89" fill="#aee8f2"/><rect x="405.67" y="669.79" width="11.89" height="11.89" fill="#aee8f2"/><rect x="417.16" y="669.79" width="11.89" height="11.89" fill="#aee8f2"/><rect x="336.70" y="681.29" width="11.89" height="11.89" fill="#aee8f2"/><rect x="348.19" y="681.29" width="11.89" height="11.89" fill="#aee8f2"/><rect x="359.69" y="681.29" width="11.89" height="11.89" fill="#aee8f2"/><rect x="371.19" y="681.29" width="11.89" height="11.89" fill="#aee8f2"/><rect x="382.68" y="681.29" width="11.89" height="11.89" fill="#aee8f2"/><rect x="394.17" y="681.29" width="11.89" height="11.89" fill="#aee8f2"/><rect x="405.67" y="681.29" width="11.89" height="11.89" fill="#aee8f2"/><rect x="417.16" y="681.29" width="11.89" height="11.89" fill="#aee8f2"/><rect x="336.70" y="692.78" width="11.89" height="11.89" fill="#aee8f2"/><rect x="348.19" y="692.78" width="11.89" height="11.89" fill="#55c3f5"/><rect x="359.69" y="692.78" width="11.89" height="11.89" fill="#55c3f5"/><rect x="371.19" y="692.78" width="11.89" height="11.89" fill="#aee8f2"/><rect x="382.68" y="692.78" width="11.89" height="11.89" fill="#aee8f2"/><rect x="394.17" y="692.78" width="11.89" height="11.89" fill="#55c3f5"/><rect x="405.67" y="692.78" width="11.89" height="11.89" fill="#55c3f5"/><rect x="417.16" y="692.78" width="11.89" height="11.89" fill="#aee8f2"/><rect x="336.70" y="704.28" width="11.89" height="11.89" fill="#5b7bff"/><rect x="348.19" y="704.28" width="11.89" height="11.89" fill="#55c3f5"/><rect x="359.69" y="704.28" width="11.89" height="11.89" fill="#55c3f5"/><rect x="371.19" y="704.28" width="11.89" height="11.89" fill="#aee8f2"/><rect x="382.68" y="704.28" width="11.89" height="11.89" fill="#aee8f2"/><rect x="394.17" y="704.28" width="11.89" height="11.89" fill="#55c3f5"/><rect x="405.67" y="704.28" width="11.89" height="11.89" fill="#55c3f5"/><rect x="417.16" y="704.28" width="11.89" height="11.89" fill="#5b7bff"/><rect x="336.70" y="715.77" width="11.89" height="11.89" fill="#8459c6"/><rect x="348.19" y="715.77" width="11.89" height="11.89" fill="#08aaf0"/><rect x="359.69" y="715.77" width="11.89" height="11.89" fill="#55c3f5"/><rect x="371.19" y="715.77" width="11.89" height="11.89" fill="#55c3f5"/><rect x="382.68" y="715.77" width="11.89" height="11.89" fill="#55c3f5"/><rect x="394.17" y="715.77" width="11.89" height="11.89" fill="#55c3f5"/><rect x="405.67" y="715.77" width="11.89" height="11.89" fill="#08aaf0"/><rect x="417.16" y="715.77" width="11.89" height="11.89" fill="#8459c6"/><rect x="336.70" y="727.27" width="11.89" height="11.89" fill="#4b178e"/><rect x="348.19" y="727.27" width="11.89" height="11.89" fill="#5b7bff"/><rect x="359.69" y="727.27" width="11.89" height="11.89" fill="#55c3f5"/><rect x="371.19" y="727.27" width="11.89" height="11.89" fill="#55c3f5"/><rect x="382.68" y="727.27" width="11.89" height="11.89" fill="#55c3f5"/><rect x="394.17" y="727.27" width="11.89" height="11.89" fill="#55c3f5"/><rect x="405.67" y="727.27" width="11.89" height="11.89" fill="#5b7bff"/><rect x="417.16" y="727.27" width="11.89" height="11.89" fill="#4b178e"/><rect x="348.19" y="738.76" width="11.89" height="11.89" fill="#5b7bff"/><rect x="359.69" y="738.76" width="11.89" height="11.89" fill="#08aaf0"/><rect x="371.19" y="738.76" width="11.89" height="11.89" fill="#55c3f5"/><rect x="382.68" y="738.76" width="11.89" height="11.89" fill="#55c3f5"/><rect x="394.17" y="738.76" width="11.89" height="11.89" fill="#08aaf0"/><rect x="405.67" y="738.76" width="11.89" height="11.89" fill="#5b7bff"/><rect x="359.69" y="750.26" width="11.89" height="11.89" fill="#08aaf0"/><rect x="371.19" y="750.26" width="11.89" height="11.89" fill="#55c3f5"/><rect x="382.68" y="750.26" width="11.89" height="11.89" fill="#55c3f5"/><rect x="394.17" y="750.26" width="11.89" height="11.89" fill="#08aaf0"/><rect x="359.69" y="761.75" width="11.89" height="11.89" fill="#5b7bff"/><rect x="371.19" y="761.75" width="11.89" height="11.89" fill="#08aaf0"/><rect x="382.68" y="761.75" width="11.89" height="11.89" fill="#08aaf0"/><rect x="394.17" y="761.75" width="11.89" height="11.89" fill="#5b7bff"/><rect x="371.19" y="773.25" width="11.89" height="11.89" fill="#5b7bff"/><rect x="382.68" y="773.25" width="11.89" height="11.89" fill="#5b7bff"/><rect x="371.19" y="784.74" width="11.89" height="11.89" fill="#8459c6"/><rect x="382.68" y="784.74" width="11.89" height="11.89" fill="#8459c6"/><rect x="371.19" y="796.24" width="11.89" height="11.89" fill="#4b178e"/><rect x="382.68" y="796.24" width="11.89" height="11.89" fill="#4b178e"/><g style="mix-blend-mode:screen"><rect x="382.70" y="122.06" width="7.96" height="7.96" fill="rgb(31,39,51)"/><rect x="375.04" y="129.72" width="7.96" height="7.96" fill="rgb(34,42,56)"/><rect x="382.70" y="129.72" width="7.96" height="7.96" fill="rgb(33,40,53)"/><rect x="375.04" y="137.38" width="7.96" height="7.96" fill="rgb(37,46,60)"/><rect x="382.70" y="137.38" width="7.96" height="7.96" fill="rgb(36,44,57)"/><rect x="375.04" y="145.05" width="7.96" height="7.96" fill="rgb(40,48,63)"/><rect x="382.70" y="145.05" width="7.96" height="7.96" fill="rgb(40,49,66)"/><rect x="375.04" y="152.71" width="7.96" height="7.96" fill="rgb(42,51,66)"/><rect x="382.70" y="152.71" width="7.96" height="7.96" fill="rgb(43,52,68)"/><rect x="375.04" y="160.38" width="7.96" height="7.96" fill="rgb(48,58,75)"/><rect x="382.70" y="160.38" width="7.96" height="7.96" fill="rgb(50,60,79)"/><rect x="375.04" y="168.04" width="7.96" height="7.96" fill="rgb(52,63,81)"/><rect x="382.70" y="168.04" width="7.96" height="7.96" fill="rgb(54,65,85)"/><rect x="375.04" y="175.70" width="7.96" height="7.96" fill="rgb(60,71,96)"/><rect x="382.70" y="175.70" width="7.96" height="7.96" fill="rgb(55,66,85)"/><rect x="359.71" y="183.37" width="7.96" height="7.96" fill="rgb(30,38,53)"/><rect x="375.04" y="183.37" width="7.96" height="7.96" fill="rgb(65,77,104)"/><rect x="382.70" y="183.37" width="7.96" height="7.96" fill="rgb(61,73,96)"/><rect x="398.03" y="183.37" width="7.96" height="7.96" fill="rgb(30,39,55)"/><rect x="352.04" y="191.03" width="7.96" height="7.96" fill="rgb(31,40,58)"/><rect x="359.71" y="191.03" width="7.96" height="7.96" fill="rgb(32,41,61)"/><rect x="375.04" y="191.03" width="7.96" height="7.96" fill="rgb(67,80,106)"/><rect x="382.70" y="191.03" width="7.96" height="7.96" fill="rgb(67,81,107)"/><rect x="390.36" y="191.03" width="7.96" height="7.96" fill="rgb(28,37,55)"/><rect x="398.03" y="191.03" width="7.96" height="7.96" fill="rgb(31,39,54)"/><rect x="405.69" y="191.03" width="7.96" height="7.96" fill="rgb(30,38,53)"/><rect x="352.04" y="198.70" width="7.96" height="7.96" fill="rgb(33,42,62)"/><rect x="359.71" y="198.70" width="7.96" height="7.96" fill="rgb(34,44,66)"/><rect x="367.37" y="198.70" width="7.96" height="7.96" fill="rgb(29,38,57)"/><rect x="375.04" y="198.70" width="7.96" height="7.96" fill="rgb(80,95,125)"/><rect x="382.70" y="198.70" width="7.96" height="7.96" fill="rgb(74,88,117)"/><rect x="390.36" y="198.70" width="7.96" height="7.96" fill="rgb(30,39,59)"/><rect x="398.03" y="198.70" width="7.96" height="7.96" fill="rgb(34,44,66)"/><rect x="405.69" y="198.70" width="7.96" height="7.96" fill="rgb(33,42,61)"/><rect x="352.04" y="206.36" width="7.96" height="7.96" fill="rgb(35,46,69)"/><rect x="359.71" y="206.36" width="7.96" height="7.96" fill="rgb(35,45,65)"/><rect x="367.37" y="206.36" width="7.96" height="7.96" fill="rgb(32,43,66)"/><rect x="375.04" y="206.36" width="7.96" height="7.96" fill="rgb(90,105,137)"/><rect x="382.70" y="206.36" width="7.96" height="7.96" fill="rgb(81,95,124)"/><rect x="390.36" y="206.36" width="7.96" height="7.96" fill="rgb(31,41,62)"/><rect x="398.03" y="206.36" width="7.96" height="7.96" fill="rgb(34,44,64)"/><rect x="405.69" y="206.36" width="7.96" height="7.96" fill="rgb(35,44,65)"/><rect x="352.04" y="214.02" width="7.96" height="7.96" fill="rgb(36,46,68)"/><rect x="359.71" y="214.02" width="7.96" height="7.96" fill="rgb(38,48,71)"/><rect x="367.37" y="214.02" width="7.96" height="7.96" fill="rgb(35,46,72)"/><rect x="375.04" y="214.02" width="7.96" height="7.96" fill="rgb(91,106,136)"/><rect x="382.70" y="214.02" width="7.96" height="7.96" fill="rgb(103,119,152)"/><rect x="390.36" y="214.02" width="7.96" height="7.96" fill="rgb(34,45,70)"/><rect x="398.03" y="214.02" width="7.96" height="7.96" fill="rgb(41,53,82)"/><rect x="405.69" y="214.02" width="7.96" height="7.96" fill="rgb(38,50,75)"/><rect x="413.36" y="214.02" width="7.96" height="7.96" fill="rgb(23,34,62)"/><rect x="329.05" y="221.69" width="7.96" height="7.96" fill="rgb(23,35,62)"/><rect x="336.72" y="221.69" width="7.96" height="7.96" fill="rgb(25,36,66)"/><rect x="344.38" y="221.69" width="7.96" height="7.96" fill="rgb(24,36,64)"/><rect x="352.04" y="221.69" width="7.96" height="7.96" fill="rgb(48,61,95)"/><rect x="359.71" y="221.69" width="7.96" height="7.96" fill="rgb(45,57,88)"/><rect x="367.37" y="221.69" width="7.96" height="7.96" fill="rgb(45,57,93)"/><rect x="375.04" y="221.69" width="7.96" height="7.96" fill="rgb(113,130,163)"/><rect x="382.70" y="221.69" width="7.96" height="7.96" fill="rgb(114,131,164)"/><rect x="390.36" y="221.69" width="7.96" height="7.96" fill="rgb(44,57,92)"/><rect x="398.03" y="221.69" width="7.96" height="7.96" fill="rgb(49,62,98)"/><rect x="405.69" y="221.69" width="7.96" height="7.96" fill="rgb(43,55,86)"/><rect x="413.36" y="221.69" width="7.96" height="7.96" fill="rgb(26,37,67)"/><rect x="421.02" y="221.69" width="7.96" height="7.96" fill="rgb(25,36,65)"/><rect x="428.68" y="221.69" width="7.96" height="7.96" fill="rgb(24,35,63)"/><rect x="436.35" y="221.69" width="7.96" height="7.96" fill="rgb(23,34,61)"/><rect x="260.08" y="229.35" width="7.96" height="7.96" fill="rgb(24,35,64)"/><rect x="267.74" y="229.35" width="7.96" height="7.96" fill="rgb(25,36,66)"/><rect x="275.40" y="229.35" width="7.96" height="7.96" fill="rgb(24,49,56)"/><rect x="283.07" y="229.35" width="7.96" height="7.96" fill="rgb(24,35,64)"/><rect x="290.73" y="229.35" width="7.96" height="7.96" fill="rgb(23,34,62)"/><rect x="298.40" y="229.35" width="7.96" height="7.96" fill="rgb(23,34,62)"/><rect x="306.06" y="229.35" width="7.96" height="7.96" fill="rgb(24,35,65)"/><rect x="313.72" y="229.35" width="7.96" height="7.96" fill="rgb(23,34,62)"/><rect x="321.39" y="229.35" width="7.96" height="7.96" fill="rgb(27,39,70)"/><rect x="329.05" y="229.35" width="7.96" height="7.96" fill="rgb(25,36,65)"/><rect x="336.72" y="229.35" width="7.96" height="7.96" fill="rgb(26,38,68)"/><rect x="344.38" y="229.35" width="7.96" height="7.96" fill="rgb(27,39,70)"/><rect x="352.04" y="229.35" width="7.96" height="7.96" fill="rgb(46,58,89)"/><rect x="359.71" y="229.35" width="7.96" height="7.96" fill="rgb(51,64,101)"/><rect x="367.37" y="229.35" width="7.96" height="7.96" fill="rgb(47,60,97)"/><rect x="375.04" y="229.35" width="7.96" height="7.96" fill="rgb(135,152,185)"/><rect x="382.70" y="229.35" width="7.96" height="7.96" fill="rgb(131,147,180)"/><rect x="390.36" y="229.35" width="7.96" height="7.96" fill="rgb(47,60,97)"/><rect x="398.03" y="229.35" width="7.96" height="7.96" fill="rgb(52,65,104)"/><rect x="405.69" y="229.35" width="7.96" height="7.96" fill="rgb(51,64,102)"/><rect x="413.36" y="229.35" width="7.96" height="7.96" fill="rgb(30,42,76)"/><rect x="421.02" y="229.35" width="7.96" height="7.96" fill="rgb(29,40,73)"/><rect x="428.68" y="229.35" width="7.96" height="7.96" fill="rgb(28,40,72)"/><rect x="436.35" y="229.35" width="7.96" height="7.96" fill="rgb(26,38,68)"/><rect x="444.01" y="229.35" width="7.96" height="7.96" fill="rgb(25,36,66)"/><rect x="451.68" y="229.35" width="7.96" height="7.96" fill="rgb(24,35,65)"/><rect x="474.67" y="229.35" width="7.96" height="7.96" fill="rgb(23,34,62)"/><rect x="482.33" y="229.35" width="7.96" height="7.96" fill="rgb(24,35,65)"/><rect x="490.00" y="229.35" width="7.96" height="7.96" fill="rgb(23,34,62)"/><rect x="497.66" y="229.35" width="7.96" height="7.96" fill="rgb(25,36,66)"/><rect x="244.75" y="237.02" width="7.96" height="7.96" fill="rgb(23,34,62)"/><rect x="252.41" y="237.02" width="7.96" height="7.96" fill="rgb(23,34,62)"/><rect x="260.08" y="237.02" width="7.96" height="7.96" fill="rgb(24,35,64)"/><rect x="267.74" y="237.02" width="7.96" height="7.96" fill="rgb(26,37,68)"/><rect x="275.40" y="237.02" width="7.96" height="7.96" fill="rgb(28,39,72)"/><rect x="283.07" y="237.02" width="7.96" height="7.96" fill="rgb(28,40,73)"/><rect x="290.73" y="237.02" width="7.96" height="7.96" fill="rgb(26,38,69)"/><rect x="298.40" y="237.02" width="7.96" height="7.96" fill="rgb(28,39,72)"/><rect x="306.06" y="237.02" width="7.96" height="7.96" fill="rgb(28,39,72)"/><rect x="313.72" y="237.02" width="7.96" height="7.96" fill="rgb(28,40,73)"/><rect x="321.39" y="237.02" width="7.96" height="7.96" fill="rgb(30,42,76)"/><rect x="329.05" y="237.02" width="7.96" height="7.96" fill="rgb(32,58,72)"/><rect x="336.72" y="237.02" width="7.96" height="7.96" fill="rgb(34,46,83)"/><rect x="344.38" y="237.02" width="7.96" height="7.96" fill="rgb(36,48,87)"/><rect x="352.04" y="237.02" width="7.96" height="7.96" fill="rgb(58,72,115)"/><rect x="359.71" y="237.02" width="7.96" height="7.96" fill="rgb(56,70,112)"/><rect x="367.37" y="237.02" width="7.96" height="7.96" fill="rgb(54,68,112)"/><rect x="375.04" y="237.02" width="7.96" height="7.96" fill="rgb(137,154,186)"/><rect x="382.70" y="237.02" width="7.96" height="7.96" fill="rgb(155,173,204)"/><rect x="390.36" y="237.02" width="7.96" height="7.96" fill="rgb(52,65,108)"/><rect x="398.03" y="237.02" width="7.96" height="7.96" fill="rgb(75,91,139)"/><rect x="405.69" y="237.02" width="7.96" height="7.96" fill="rgb(59,73,117)"/><rect x="413.36" y="237.02" width="7.96" height="7.96" fill="rgb(38,51,92)"/><rect x="421.02" y="237.02" width="7.96" height="7.96" fill="rgb(30,42,76)"/><rect x="428.68" y="237.02" width="7.96" height="7.96" fill="rgb(30,42,76)"/><rect x="436.35" y="237.02" width="7.96" height="7.96" fill="rgb(29,41,74)"/><rect x="444.01" y="237.02" width="7.96" height="7.96" fill="rgb(26,38,69)"/><rect x="451.68" y="237.02" width="7.96" height="7.96" fill="rgb(26,38,69)"/><rect x="459.34" y="237.02" width="7.96" height="7.96" fill="rgb(28,40,72)"/><rect x="467.00" y="237.02" width="7.96" height="7.96" fill="rgb(26,38,69)"/><rect x="474.67" y="237.02" width="7.96" height="7.96" fill="rgb(29,41,74)"/><rect x="482.33" y="237.02" width="7.96" height="7.96" fill="rgb(27,39,71)"/><rect x="490.00" y="237.02" width="7.96" height="7.96" fill="rgb(27,39,71)"/><rect x="497.66" y="237.02" width="7.96" height="7.96" fill="rgb(25,36,67)"/><rect x="505.32" y="237.02" width="7.96" height="7.96" fill="rgb(23,34,63)"/><rect x="244.75" y="244.68" width="7.96" height="7.96" fill="rgb(23,34,62)"/><rect x="252.41" y="244.68" width="7.96" height="7.96" fill="rgb(25,37,67)"/><rect x="260.08" y="244.68" width="7.96" height="7.96" fill="rgb(27,39,71)"/><rect x="267.74" y="244.68" width="7.96" height="7.96" fill="rgb(31,43,78)"/><rect x="275.40" y="244.68" width="7.96" height="7.96" fill="rgb(33,46,83)"/><rect x="283.07" y="244.68" width="7.96" height="7.96" fill="rgb(30,42,77)"/><rect x="290.73" y="244.68" width="7.96" height="7.96" fill="rgb(35,48,87)"/><rect x="298.40" y="244.68" width="7.96" height="7.96" fill="rgb(31,43,79)"/><rect x="306.06" y="244.68" width="7.96" height="7.96" fill="rgb(32,44,81)"/><rect x="313.72" y="244.68" width="7.96" height="7.96" fill="rgb(33,45,83)"/><rect x="321.39" y="244.68" width="7.96" height="7.96" fill="rgb(37,50,91)"/><rect x="329.05" y="244.68" width="7.96" height="7.96" fill="rgb(40,54,97)"/><rect x="336.72" y="244.68" width="7.96" height="7.96" fill="rgb(40,67,88)"/><rect x="344.38" y="244.68" width="7.96" height="7.96" fill="rgb(50,65,117)"/><rect x="352.04" y="244.68" width="7.96" height="7.96" fill="rgb(71,86,133)"/><rect x="359.71" y="244.68" width="7.96" height="7.96" fill="rgb(86,102,150)"/><rect x="367.37" y="244.68" width="7.96" height="7.96" fill="rgb(87,103,154)"/><rect x="375.04" y="244.68" width="7.96" height="7.96" fill="rgb(165,182,211)"/><rect x="382.70" y="244.68" width="7.96" height="7.96" fill="rgb(175,191,219)"/><rect x="390.36" y="244.68" width="7.96" height="7.96" fill="rgb(88,104,155)"/><rect x="398.03" y="244.68" width="7.96" height="7.96" fill="rgb(83,99,146)"/><rect x="405.69" y="244.68" width="7.96" height="7.96" fill="rgb(79,95,143)"/><rect x="413.36" y="244.68" width="7.96" height="7.96" fill="rgb(43,56,102)"/><rect x="421.02" y="244.68" width="7.96" height="7.96" fill="rgb(45,60,108)"/><rect x="428.68" y="244.68" width="7.96" height="7.96" fill="rgb(39,66,86)"/><rect x="436.35" y="244.68" width="7.96" height="7.96" fill="rgb(33,45,81)"/><rect x="444.01" y="244.68" width="7.96" height="7.96" fill="rgb(38,51,93)"/><rect x="451.68" y="244.68" width="7.96" height="7.96" fill="rgb(31,43,79)"/><rect x="459.34" y="244.68" width="7.96" height="7.96" fill="rgb(30,42,77)"/><rect x="467.00" y="244.68" width="7.96" height="7.96" fill="rgb(35,48,87)"/><rect x="474.67" y="244.68" width="7.96" height="7.96" fill="rgb(35,48,87)"/><rect x="482.33" y="244.68" width="7.96" height="7.96" fill="rgb(30,41,76)"/><rect x="490.00" y="244.68" width="7.96" height="7.96" fill="rgb(28,39,72)"/><rect x="497.66" y="244.68" width="7.96" height="7.96" fill="rgb(25,36,67)"/><rect x="505.32" y="244.68" width="7.96" height="7.96" fill="rgb(24,49,57)"/><rect x="229.42" y="252.34" width="7.96" height="7.96" fill="rgb(23,34,62)"/><rect x="252.41" y="252.34" width="7.96" height="7.96" fill="rgb(26,37,68)"/><rect x="260.08" y="252.34" width="7.96" height="7.96" fill="rgb(25,37,67)"/><rect x="267.74" y="252.34" width="7.96" height="7.96" fill="rgb(29,40,74)"/><rect x="275.40" y="252.34" width="7.96" height="7.96" fill="rgb(35,48,88)"/><rect x="283.07" y="252.34" width="7.96" height="7.96" fill="rgb(36,49,90)"/><rect x="290.73" y="252.34" width="7.96" height="7.96" fill="rgb(39,52,94)"/><rect x="298.40" y="252.34" width="7.96" height="7.96" fill="rgb(39,52,96)"/><rect x="306.06" y="252.34" width="7.96" height="7.96" fill="rgb(46,61,110)"/><rect x="313.72" y="252.34" width="7.96" height="7.96" fill="rgb(44,58,106)"/><rect x="321.39" y="252.34" width="7.96" height="7.96" fill="rgb(48,62,112)"/><rect x="329.05" y="252.34" width="7.96" height="7.96" fill="rgb(44,58,104)"/><rect x="336.72" y="252.34" width="7.96" height="7.96" fill="rgb(53,68,122)"/><rect x="344.38" y="252.34" width="7.96" height="7.96" fill="rgb(51,66,120)"/><rect x="352.04" y="252.34" width="7.96" height="7.96" fill="rgb(96,111,159)"/><rect x="359.71" y="252.34" width="7.96" height="7.96" fill="rgb(108,124,172)"/><rect x="367.37" y="252.34" width="7.96" height="7.96" fill="rgb(91,107,158)"/><rect x="375.04" y="252.34" width="7.96" height="7.96" fill="rgb(207,222,241)"/><rect x="382.70" y="252.34" width="7.96" height="7.96" fill="rgb(196,211,234)"/><rect x="390.36" y="252.34" width="7.96" height="7.96" fill="rgb(98,114,164)"/><rect x="398.03" y="252.34" width="7.96" height="7.96" fill="rgb(113,129,175)"/><rect x="405.69" y="252.34" width="7.96" height="7.96" fill="rgb(99,115,163)"/><rect x="413.36" y="252.34" width="7.96" height="7.96" fill="rgb(53,68,123)"/><rect x="421.02" y="252.34" width="7.96" height="7.96" fill="rgb(60,90,127)"/><rect x="428.68" y="252.34" width="7.96" height="7.96" fill="rgb(49,64,115)"/><rect x="436.35" y="252.34" width="7.96" height="7.96" fill="rgb(40,54,97)"/><rect x="444.01" y="252.34" width="7.96" height="7.96" fill="rgb(41,54,98)"/><rect x="451.68" y="252.34" width="7.96" height="7.96" fill="rgb(49,63,115)"/><rect x="459.34" y="252.34" width="7.96" height="7.96" fill="rgb(42,56,101)"/><rect x="467.00" y="252.34" width="7.96" height="7.96" fill="rgb(43,71,96)"/><rect x="474.67" y="252.34" width="7.96" height="7.96" fill="rgb(36,48,88)"/><rect x="482.33" y="252.34" width="7.96" height="7.96" fill="rgb(37,50,92)"/><rect x="490.00" y="252.34" width="7.96" height="7.96" fill="rgb(29,41,74)"/><rect x="497.66" y="252.34" width="7.96" height="7.96" fill="rgb(27,39,71)"/><rect x="505.32" y="252.34" width="7.96" height="7.96" fill="rgb(26,37,69)"/><rect x="512.99" y="252.34" width="7.96" height="7.96" fill="rgb(24,35,64)"/><rect x="520.65" y="252.34" width="7.96" height="7.96" fill="rgb(24,35,64)"/><rect x="229.42" y="260.01" width="7.96" height="7.96" fill="rgb(25,36,66)"/><rect x="237.08" y="260.01" width="7.96" height="7.96" fill="rgb(25,36,67)"/><rect x="244.75" y="260.01" width="7.96" height="7.96" fill="rgb(26,37,68)"/><rect x="252.41" y="260.01" width="7.96" height="7.96" fill="rgb(30,42,76)"/><rect x="260.08" y="260.01" width="7.96" height="7.96" fill="rgb(31,43,79)"/><rect x="267.74" y="260.01" width="7.96" height="7.96" fill="rgb(33,45,83)"/><rect x="275.40" y="260.01" width="7.96" height="7.96" fill="rgb(41,54,99)"/><rect x="283.07" y="260.01" width="7.96" height="7.96" fill="rgb(43,57,103)"/><rect x="290.73" y="260.01" width="7.96" height="7.96" fill="rgb(52,67,121)"/><rect x="298.40" y="260.01" width="7.96" height="7.96" fill="rgb(59,75,135)"/><rect x="306.06" y="260.01" width="7.96" height="7.96" fill="rgb(50,65,119)"/><rect x="313.72" y="260.01" width="7.96" height="7.96" fill="rgb(71,87,146)"/><rect x="321.39" y="260.01" width="7.96" height="7.96" fill="rgb(68,84,142)"/><rect x="329.05" y="260.01" width="7.96" height="7.96" fill="rgb(73,89,147)"/><rect x="336.72" y="260.01" width="7.96" height="7.96" fill="rgb(78,94,151)"/><rect x="344.38" y="260.01" width="7.96" height="7.96" fill="rgb(94,110,166)"/><rect x="352.04" y="260.01" width="7.96" height="7.96" fill="rgb(148,163,205)"/><rect x="359.71" y="260.01" width="7.96" height="7.96" fill="rgb(133,149,193)"/><rect x="367.37" y="260.01" width="7.96" height="7.96" fill="rgb(129,145,191)"/><rect x="375.04" y="260.01" width="7.96" height="7.96" fill="rgb(251,255,255)"/><rect x="382.70" y="260.01" width="7.96" height="7.96" fill="rgb(244,255,255)"/><rect x="390.36" y="260.01" width="7.96" height="7.96" fill="rgb(113,128,177)"/><rect x="398.03" y="260.01" width="7.96" height="7.96" fill="rgb(123,139,185)"/><rect x="405.69" y="260.01" width="7.96" height="7.96" fill="rgb(141,156,200)"/><rect x="413.36" y="260.01" width="7.96" height="7.96" fill="rgb(88,104,160)"/><rect x="421.02" y="260.01" width="7.96" height="7.96" fill="rgb(85,101,157)"/><rect x="428.68" y="260.01" width="7.96" height="7.96" fill="rgb(60,76,135)"/><rect x="436.35" y="260.01" width="7.96" height="7.96" fill="rgb(57,87,124)"/><rect x="444.01" y="260.01" width="7.96" height="7.96" fill="rgb(52,68,123)"/><rect x="451.68" y="260.01" width="7.96" height="7.96" fill="rgb(54,70,127)"/><rect x="459.34" y="260.01" width="7.96" height="7.96" fill="rgb(63,79,138)"/><rect x="467.00" y="260.01" width="7.96" height="7.96" fill="rgb(46,60,109)"/><rect x="474.67" y="260.01" width="7.96" height="7.96" fill="rgb(44,58,106)"/><rect x="482.33" y="260.01" width="7.96" height="7.96" fill="rgb(34,46,84)"/><rect x="490.00" y="260.01" width="7.96" height="7.96" fill="rgb(31,43,78)"/><rect x="497.66" y="260.01" width="7.96" height="7.96" fill="rgb(31,43,79)"/><rect x="505.32" y="260.01" width="7.96" height="7.96" fill="rgb(28,39,72)"/><rect x="512.99" y="260.01" width="7.96" height="7.96" fill="rgb(26,38,69)"/><rect x="520.65" y="260.01" width="7.96" height="7.96" fill="rgb(24,35,65)"/><rect x="535.98" y="260.01" width="7.96" height="7.96" fill="rgb(23,34,63)"/><rect x="229.42" y="267.67" width="7.96" height="7.96" fill="rgb(25,36,67)"/><rect x="237.08" y="267.67" width="7.96" height="7.96" fill="rgb(26,37,68)"/><rect x="244.75" y="267.67" width="7.96" height="7.96" fill="rgb(27,39,71)"/><rect x="252.41" y="267.67" width="7.96" height="7.96" fill="rgb(31,43,79)"/><rect x="260.08" y="267.67" width="7.96" height="7.96" fill="rgb(35,48,88)"/><rect x="267.74" y="267.67" width="7.96" height="7.96" fill="rgb(38,51,93)"/><rect x="275.40" y="267.67" width="7.96" height="7.96" fill="rgb(38,66,86)"/><rect x="283.07" y="267.67" width="7.96" height="7.96" fill="rgb(43,57,104)"/><rect x="290.73" y="267.67" width="7.96" height="7.96" fill="rgb(48,62,113)"/><rect x="298.40" y="267.67" width="7.96" height="7.96" fill="rgb(61,77,137)"/><rect x="306.06" y="267.67" width="7.96" height="7.96" fill="rgb(73,89,147)"/><rect x="313.72" y="267.67" width="7.96" height="7.96" fill="rgb(77,93,151)"/><rect x="321.39" y="267.67" width="7.96" height="7.96" fill="rgb(91,107,163)"/><rect x="329.05" y="267.67" width="7.96" height="7.96" fill="rgb(78,94,151)"/><rect x="336.72" y="267.67" width="7.96" height="7.96" fill="rgb(102,118,174)"/><rect x="344.38" y="267.67" width="7.96" height="7.96" fill="rgb(118,147,177)"/><rect x="352.04" y="267.67" width="7.96" height="7.96" fill="rgb(181,194,227)"/><rect x="359.71" y="267.67" width="7.96" height="7.96" fill="rgb(177,190,224)"/><rect x="367.37" y="267.67" width="7.96" height="7.96" fill="rgb(154,168,211)"/><rect x="375.04" y="267.67" width="7.96" height="7.96" fill="rgb(251,255,255)"/><rect x="382.70" y="267.67" width="7.96" height="7.96" fill="rgb(251,255,255)"/><rect x="390.36" y="267.67" width="7.96" height="7.96" fill="rgb(160,174,214)"/><rect x="398.03" y="267.67" width="7.96" height="7.96" fill="rgb(162,177,215)"/><rect x="405.69" y="267.67" width="7.96" height="7.96" fill="rgb(182,194,228)"/><rect x="413.36" y="267.67" width="7.96" height="7.96" fill="rgb(121,136,188)"/><rect x="421.02" y="267.67" width="7.96" height="7.96" fill="rgb(117,132,185)"/><rect x="428.68" y="267.67" width="7.96" height="7.96" fill="rgb(93,109,165)"/><rect x="436.35" y="267.67" width="7.96" height="7.96" fill="rgb(84,100,157)"/><rect x="444.01" y="267.67" width="7.96" height="7.96" fill="rgb(81,97,155)"/><rect x="451.68" y="267.67" width="7.96" height="7.96" fill="rgb(91,107,164)"/><rect x="459.34" y="267.67" width="7.96" height="7.96" fill="rgb(73,89,148)"/><rect x="467.00" y="267.67" width="7.96" height="7.96" fill="rgb(52,67,121)"/><rect x="474.67" y="267.67" width="7.96" height="7.96" fill="rgb(53,68,124)"/><rect x="482.33" y="267.67" width="7.96" height="7.96" fill="rgb(37,50,91)"/><rect x="490.00" y="267.67" width="7.96" height="7.96" fill="rgb(36,49,90)"/><rect x="497.66" y="267.67" width="7.96" height="7.96" fill="rgb(32,44,80)"/><rect x="505.32" y="267.67" width="7.96" height="7.96" fill="rgb(30,42,77)"/><rect x="512.99" y="267.67" width="7.96" height="7.96" fill="rgb(28,40,73)"/><rect x="520.65" y="267.67" width="7.96" height="7.96" fill="rgb(27,38,70)"/><rect x="528.32" y="267.67" width="7.96" height="7.96" fill="rgb(26,51,60)"/><rect x="535.98" y="267.67" width="7.96" height="7.96" fill="rgb(23,34,63)"/><rect x="229.42" y="275.34" width="7.96" height="7.96" fill="rgb(23,34,63)"/><rect x="237.08" y="275.34" width="7.96" height="7.96" fill="rgb(26,37,69)"/><rect x="244.75" y="275.34" width="7.96" height="7.96" fill="rgb(29,40,74)"/><rect x="252.41" y="275.34" width="7.96" height="7.96" fill="rgb(33,46,83)"/><rect x="260.08" y="275.34" width="7.96" height="7.96" fill="rgb(40,53,97)"/><rect x="267.74" y="275.34" width="7.96" height="7.96" fill="rgb(49,63,115)"/><rect x="275.40" y="275.34" width="7.96" height="7.96" fill="rgb(53,68,124)"/><rect x="283.07" y="275.34" width="7.96" height="7.96" fill="rgb(57,73,133)"/><rect x="290.73" y="275.34" width="7.96" height="7.96" fill="rgb(74,90,149)"/><rect x="298.40" y="275.34" width="7.96" height="7.96" fill="rgb(69,85,144)"/><rect x="306.06" y="275.34" width="7.96" height="7.96" fill="rgb(83,113,149)"/><rect x="313.72" y="275.34" width="7.96" height="7.96" fill="rgb(120,136,189)"/><rect x="321.39" y="275.34" width="7.96" height="7.96" fill="rgb(113,143,174)"/><rect x="329.05" y="275.34" width="7.96" height="7.96" fill="rgb(107,123,177)"/><rect x="336.72" y="275.34" width="7.96" height="7.96" fill="rgb(126,141,192)"/><rect x="344.38" y="275.34" width="7.96" height="7.96" fill="rgb(148,162,209)"/><rect x="352.04" y="275.34" width="7.96" height="7.96" fill="rgb(210,220,242)"/><rect x="359.71" y="275.34" width="7.96" height="7.96" fill="rgb(251,254,255)"/><rect x="367.37" y="275.34" width="7.96" height="7.96" fill="rgb(205,215,241)"/><rect x="375.04" y="275.34" width="7.96" height="7.96" fill="rgb(251,255,255)"/><rect x="382.70" y="275.34" width="7.96" height="7.96" fill="rgb(251,255,255)"/><rect x="390.36" y="275.34" width="7.96" height="7.96" fill="rgb(171,184,221)"/><rect x="398.03" y="275.34" width="7.96" height="7.96" fill="rgb(187,200,232)"/><rect x="405.69" y="275.34" width="7.96" height="7.96" fill="rgb(213,223,243)"/><rect x="413.36" y="275.34" width="7.96" height="7.96" fill="rgb(128,142,193)"/><rect x="421.02" y="275.34" width="7.96" height="7.96" fill="rgb(157,170,214)"/><rect x="428.68" y="275.34" width="7.96" height="7.96" fill="rgb(128,143,194)"/><rect x="436.35" y="275.34" width="7.96" height="7.96" fill="rgb(131,146,196)"/><rect x="444.01" y="275.34" width="7.96" height="7.96" fill="rgb(94,110,167)"/><rect x="451.68" y="275.34" width="7.96" height="7.96" fill="rgb(100,116,172)"/><rect x="459.34" y="275.34" width="7.96" height="7.96" fill="rgb(96,112,169)"/><rect x="467.00" y="275.34" width="7.96" height="7.96" fill="rgb(76,92,151)"/><rect x="474.67" y="275.34" width="7.96" height="7.96" fill="rgb(55,71,129)"/><rect x="482.33" y="275.34" width="7.96" height="7.96" fill="rgb(49,64,116)"/><rect x="490.00" y="275.34" width="7.96" height="7.96" fill="rgb(47,61,111)"/><rect x="497.66" y="275.34" width="7.96" height="7.96" fill="rgb(35,47,86)"/><rect x="505.32" y="275.34" width="7.96" height="7.96" fill="rgb(34,46,84)"/><rect x="512.99" y="275.34" width="7.96" height="7.96" fill="rgb(30,42,76)"/><rect x="520.65" y="275.34" width="7.96" height="7.96" fill="rgb(27,38,70)"/><rect x="528.32" y="275.34" width="7.96" height="7.96" fill="rgb(23,34,62)"/><rect x="168.11" y="283.00" width="7.96" height="7.96" fill="rgb(25,36,66)"/><rect x="175.77" y="283.00" width="7.96" height="7.96" fill="rgb(25,36,66)"/><rect x="183.44" y="283.00" width="7.96" height="7.96" fill="rgb(25,36,67)"/><rect x="191.10" y="283.00" width="7.96" height="7.96" fill="rgb(25,36,66)"/><rect x="198.76" y="283.00" width="7.96" height="7.96" fill="rgb(28,39,72)"/><rect x="206.43" y="283.00" width="7.96" height="7.96" fill="rgb(29,41,75)"/><rect x="214.09" y="283.00" width="7.96" height="7.96" fill="rgb(31,43,79)"/><rect x="221.76" y="283.00" width="7.96" height="7.96" fill="rgb(32,44,81)"/><rect x="229.42" y="283.00" width="7.96" height="7.96" fill="rgb(38,51,94)"/><rect x="237.08" y="283.00" width="7.96" height="7.96" fill="rgb(36,49,89)"/><rect x="244.75" y="283.00" width="7.96" height="7.96" fill="rgb(44,58,106)"/><rect x="252.41" y="283.00" width="7.96" height="7.96" fill="rgb(54,70,127)"/><rect x="260.08" y="283.00" width="7.96" height="7.96" fill="rgb(69,85,144)"/><rect x="267.74" y="283.00" width="7.96" height="7.96" fill="rgb(68,84,143)"/><rect x="275.40" y="283.00" width="7.96" height="7.96" fill="rgb(94,110,167)"/><rect x="283.07" y="283.00" width="7.96" height="7.96" fill="rgb(118,147,178)"/><rect x="290.73" y="283.00" width="7.96" height="7.96" fill="rgb(119,134,187)"/><rect x="298.40" y="283.00" width="7.96" height="7.96" fill="rgb(152,165,212)"/><rect x="306.06" y="283.00" width="7.96" height="7.96" fill="rgb(170,182,222)"/><rect x="313.72" y="283.00" width="7.96" height="7.96" fill="rgb(204,213,241)"/><rect x="321.39" y="283.00" width="7.96" height="7.96" fill="rgb(211,219,243)"/><rect x="329.05" y="283.00" width="7.96" height="7.96" fill="rgb(254,255,255)"/><rect x="336.72" y="283.00" width="7.96" height="7.96" fill="rgb(218,225,245)"/><rect x="344.38" y="283.00" width="7.96" height="7.96" fill="rgb(254,255,255)"/><rect x="352.04" y="283.00" width="7.96" height="7.96" fill="rgb(254,255,255)"/><rect x="359.71" y="283.00" width="7.96" height="7.96" fill="rgb(253,255,255)"/><rect x="367.37" y="283.00" width="7.96" height="7.96" fill="rgb(254,255,255)"/><rect x="375.04" y="283.00" width="7.96" height="7.96" fill="rgb(252,255,255)"/><rect x="382.70" y="283.00" width="7.96" height="7.96" fill="rgb(252,255,255)"/><rect x="390.36" y="283.00" width="7.96" height="7.96" fill="rgb(254,255,255)"/><rect x="398.03" y="283.00" width="7.96" height="7.96" fill="rgb(254,255,255)"/><rect x="405.69" y="283.00" width="7.96" height="7.96" fill="rgb(253,255,255)"/><rect x="413.36" y="283.00" width="7.96" height="7.96" fill="rgb(254,255,255)"/><rect x="421.02" y="283.00" width="7.96" height="7.96" fill="rgb(201,211,239)"/><rect x="428.68" y="283.00" width="7.96" height="7.96" fill="rgb(254,255,255)"/><rect x="436.35" y="283.00" width="7.96" height="7.96" fill="rgb(169,182,222)"/><rect x="444.01" y="283.00" width="7.96" height="7.96" fill="rgb(182,193,229)"/><rect x="451.68" y="283.00" width="7.96" height="7.96" fill="rgb(123,138,191)"/><rect x="459.34" y="283.00" width="7.96" height="7.96" fill="rgb(121,136,189)"/><rect x="467.00" y="283.00" width="7.96" height="7.96" fill="rgb(98,114,171)"/><rect x="474.67" y="283.00" width="7.96" height="7.96" fill="rgb(109,125,180)"/><rect x="482.33" y="283.00" width="7.96" height="7.96" fill="rgb(90,106,163)"/><rect x="490.00" y="283.00" width="7.96" height="7.96" fill="rgb(82,98,156)"/><rect x="497.66" y="283.00" width="7.96" height="7.96" fill="rgb(64,80,139)"/><rect x="505.32" y="283.00" width="7.96" height="7.96" fill="rgb(57,72,131)"/><rect x="512.99" y="283.00" width="7.96" height="7.96" fill="rgb(41,55,100)"/><rect x="520.65" y="283.00" width="7.96" height="7.96" fill="rgb(45,73,99)"/><rect x="528.32" y="283.00" width="7.96" height="7.96" fill="rgb(40,54,98)"/><rect x="535.98" y="283.00" width="7.96" height="7.96" fill="rgb(36,49,89)"/><rect x="543.64" y="283.00" width="7.96" height="7.96" fill="rgb(30,42,76)"/><rect x="551.31" y="283.00" width="7.96" height="7.96" fill="rgb(30,42,76)"/><rect x="558.97" y="283.00" width="7.96" height="7.96" fill="rgb(27,39,71)"/><rect x="566.64" y="283.00" width="7.96" height="7.96" fill="rgb(25,37,67)"/><rect x="574.30" y="283.00" width="7.96" height="7.96" fill="rgb(25,36,66)"/><rect x="581.96" y="283.00" width="7.96" height="7.96" fill="rgb(26,37,68)"/><rect x="237.08" y="290.66" width="7.96" height="7.96" fill="rgb(25,37,67)"/><rect x="244.75" y="290.66" width="7.96" height="7.96" fill="rgb(29,40,74)"/><rect x="252.41" y="290.66" width="7.96" height="7.96" fill="rgb(38,51,93)"/><rect x="260.08" y="290.66" width="7.96" height="7.96" fill="rgb(37,50,92)"/><rect x="267.74" y="290.66" width="7.96" height="7.96" fill="rgb(44,58,106)"/><rect x="275.40" y="290.66" width="7.96" height="7.96" fill="rgb(55,70,128)"/><rect x="283.07" y="290.66" width="7.96" height="7.96" fill="rgb(80,96,154)"/><rect x="290.73" y="290.66" width="7.96" height="7.96" fill="rgb(85,101,159)"/><rect x="298.40" y="290.66" width="7.96" height="7.96" fill="rgb(97,113,170)"/><rect x="306.06" y="290.66" width="7.96" height="7.96" fill="rgb(129,144,195)"/><rect x="313.72" y="290.66" width="7.96" height="7.96" fill="rgb(154,168,213)"/><rect x="321.39" y="290.66" width="7.96" height="7.96" fill="rgb(197,207,238)"/><rect x="329.05" y="290.66" width="7.96" height="7.96" fill="rgb(238,242,250)"/><rect x="336.72" y="290.66" width="7.96" height="7.96" fill="rgb(254,255,255)"/><rect x="344.38" y="290.66" width="7.96" height="7.96" fill="rgb(254,255,255)"/><rect x="352.04" y="290.66" width="7.96" height="7.96" fill="rgb(254,255,255)"/><rect x="359.71" y="290.66" width="7.96" height="7.96" fill="rgb(253,255,255)"/><rect x="367.37" y="290.66" width="7.96" height="7.96" fill="rgb(254,255,255)"/><rect x="375.04" y="290.66" width="7.96" height="7.96" fill="rgb(252,255,255)"/><rect x="382.70" y="290.66" width="7.96" height="7.96" fill="rgb(252,255,255)"/><rect x="390.36" y="290.66" width="7.96" height="7.96" fill="rgb(254,255,255)"/><rect x="398.03" y="290.66" width="7.96" height="7.96" fill="rgb(253,255,255)"/><rect x="405.69" y="290.66" width="7.96" height="7.96" fill="rgb(240,246,252)"/><rect x="413.36" y="290.66" width="7.96" height="7.96" fill="rgb(254,255,255)"/><rect x="421.02" y="290.66" width="7.96" height="7.96" fill="rgb(250,251,253)"/><rect x="428.68" y="290.66" width="7.96" height="7.96" fill="rgb(214,222,244)"/><rect x="436.35" y="290.66" width="7.96" height="7.96" fill="rgb(198,208,239)"/><rect x="444.01" y="290.66" width="7.96" height="7.96" fill="rgb(152,166,212)"/><rect x="451.68" y="290.66" width="7.96" height="7.96" fill="rgb(135,149,200)"/><rect x="459.34" y="290.66" width="7.96" height="7.96" fill="rgb(105,121,176)"/><rect x="467.00" y="290.66" width="7.96" height="7.96" fill="rgb(93,109,166)"/><rect x="474.67" y="290.66" width="7.96" height="7.96" fill="rgb(91,107,164)"/><rect x="482.33" y="290.66" width="7.96" height="7.96" fill="rgb(69,99,136)"/><rect x="490.00" y="290.66" width="7.96" height="7.96" fill="rgb(43,57,103)"/><rect x="497.66" y="290.66" width="7.96" height="7.96" fill="rgb(44,58,106)"/><rect x="505.32" y="290.66" width="7.96" height="7.96" fill="rgb(32,44,80)"/><rect x="512.99" y="290.66" width="7.96" height="7.96" fill="rgb(28,40,73)"/><rect x="520.65" y="290.66" width="7.96" height="7.96" fill="rgb(25,36,66)"/><rect x="528.32" y="290.66" width="7.96" height="7.96" fill="rgb(23,34,62)"/><rect x="229.42" y="298.33" width="7.96" height="7.96" fill="rgb(25,37,67)"/><rect x="237.08" y="298.33" width="7.96" height="7.96" fill="rgb(26,37,68)"/><rect x="244.75" y="298.33" width="7.96" height="7.96" fill="rgb(30,42,76)"/><rect x="252.41" y="298.33" width="7.96" height="7.96" fill="rgb(34,46,84)"/><rect x="260.08" y="298.33" width="7.96" height="7.96" fill="rgb(43,57,104)"/><rect x="267.74" y="298.33" width="7.96" height="7.96" fill="rgb(54,70,127)"/><rect x="275.40" y="298.33" width="7.96" height="7.96" fill="rgb(56,72,131)"/><rect x="283.07" y="298.33" width="7.96" height="7.96" fill="rgb(79,95,153)"/><rect x="290.73" y="298.33" width="7.96" height="7.96" fill="rgb(99,115,172)"/><rect x="298.40" y="298.33" width="7.96" height="7.96" fill="rgb(106,122,178)"/><rect x="306.06" y="298.33" width="7.96" height="7.96" fill="rgb(163,176,218)"/><rect x="313.72" y="298.33" width="7.96" height="7.96" fill="rgb(159,173,216)"/><rect x="321.39" y="298.33" width="7.96" height="7.96" fill="rgb(213,221,243)"/><rect x="329.05" y="298.33" width="7.96" height="7.96" fill="rgb(215,222,244)"/><rect x="336.72" y="298.33" width="7.96" height="7.96" fill="rgb(254,255,255)"/><rect x="344.38" y="298.33" width="7.96" height="7.96" fill="rgb(254,255,255)"/><rect x="352.04" y="298.33" width="7.96" height="7.96" fill="rgb(254,255,255)"/><rect x="359.71" y="298.33" width="7.96" height="7.96" fill="rgb(254,255,255)"/><rect x="367.37" y="298.33" width="7.96" height="7.96" fill="rgb(254,255,255)"/><rect x="375.04" y="298.33" width="7.96" height="7.96" fill="rgb(252,255,255)"/><rect x="382.70" y="298.33" width="7.96" height="7.96" fill="rgb(252,255,255)"/><rect x="390.36" y="298.33" width="7.96" height="7.96" fill="rgb(254,255,255)"/><rect x="398.03" y="298.33" width="7.96" height="7.96" fill="rgb(253,255,255)"/><rect x="405.69" y="298.33" width="7.96" height="7.96" fill="rgb(253,255,255)"/><rect x="413.36" y="298.33" width="7.96" height="7.96" fill="rgb(254,255,255)"/><rect x="421.02" y="298.33" width="7.96" height="7.96" fill="rgb(236,240,250)"/><rect x="428.68" y="298.33" width="7.96" height="7.96" fill="rgb(254,255,255)"/><rect x="436.35" y="298.33" width="7.96" height="7.96" fill="rgb(221,227,245)"/><rect x="444.01" y="298.33" width="7.96" height="7.96" fill="rgb(207,216,242)"/><rect x="451.68" y="298.33" width="7.96" height="7.96" fill="rgb(166,179,220)"/><rect x="459.34" y="298.33" width="7.96" height="7.96" fill="rgb(103,119,175)"/><rect x="467.00" y="298.33" width="7.96" height="7.96" fill="rgb(106,122,177)"/><rect x="474.67" y="298.33" width="7.96" height="7.96" fill="rgb(63,79,139)"/><rect x="482.33" y="298.33" width="7.96" height="7.96" fill="rgb(71,87,145)"/><rect x="490.00" y="298.33" width="7.96" height="7.96" fill="rgb(43,57,104)"/><rect x="497.66" y="298.33" width="7.96" height="7.96" fill="rgb(47,61,111)"/><rect x="505.32" y="298.33" width="7.96" height="7.96" fill="rgb(37,49,90)"/><rect x="512.99" y="298.33" width="7.96" height="7.96" fill="rgb(31,42,78)"/><rect x="520.65" y="298.33" width="7.96" height="7.96" fill="rgb(27,38,70)"/><rect x="528.32" y="298.33" width="7.96" height="7.96" fill="rgb(23,34,62)"/><rect x="152.78" y="305.99" width="7.96" height="7.96" fill="rgb(23,34,62)"/><rect x="160.44" y="305.99" width="7.96" height="7.96" fill="rgb(24,35,64)"/><rect x="168.11" y="305.99" width="7.96" height="7.96" fill="rgb(25,37,67)"/><rect x="175.77" y="305.99" width="7.96" height="7.96" fill="rgb(26,37,68)"/><rect x="183.44" y="305.99" width="7.96" height="7.96" fill="rgb(25,37,67)"/><rect x="191.10" y="305.99" width="7.96" height="7.96" fill="rgb(29,41,74)"/><rect x="198.76" y="305.99" width="7.96" height="7.96" fill="rgb(29,41,74)"/><rect x="206.43" y="305.99" width="7.96" height="7.96" fill="rgb(30,42,76)"/><rect x="214.09" y="305.99" width="7.96" height="7.96" fill="rgb(35,47,86)"/><rect x="221.76" y="305.99" width="7.96" height="7.96" fill="rgb(39,52,94)"/><rect x="229.42" y="305.99" width="7.96" height="7.96" fill="rgb(42,55,101)"/><rect x="237.08" y="305.99" width="7.96" height="7.96" fill="rgb(40,53,97)"/><rect x="244.75" y="305.99" width="7.96" height="7.96" fill="rgb(50,65,118)"/><rect x="252.41" y="305.99" width="7.96" height="7.96" fill="rgb(64,80,139)"/><rect x="260.08" y="305.99" width="7.96" height="7.96" fill="rgb(71,87,146)"/><rect x="267.74" y="305.99" width="7.96" height="7.96" fill="rgb(75,91,149)"/><rect x="275.40" y="305.99" width="7.96" height="7.96" fill="rgb(99,115,172)"/><rect x="283.07" y="305.99" width="7.96" height="7.96" fill="rgb(117,133,186)"/><rect x="290.73" y="305.99" width="7.96" height="7.96" fill="rgb(146,160,208)"/><rect x="298.40" y="305.99" width="7.96" height="7.96" fill="rgb(172,184,224)"/><rect x="306.06" y="305.99" width="7.96" height="7.96" fill="rgb(179,191,228)"/><rect x="313.72" y="305.99" width="7.96" height="7.96" fill="rgb(212,220,243)"/><rect x="321.39" y="305.99" width="7.96" height="7.96" fill="rgb(253,254,254)"/><rect x="329.05" y="305.99" width="7.96" height="7.96" fill="rgb(254,255,255)"/><rect x="336.72" y="305.99" width="7.96" height="7.96" fill="rgb(254,255,255)"/><rect x="344.38" y="305.99" width="7.96" height="7.96" fill="rgb(254,255,255)"/><rect x="352.04" y="305.99" width="7.96" height="7.96" fill="rgb(254,255,255)"/><rect x="359.71" y="305.99" width="7.96" height="7.96" fill="rgb(254,255,255)"/><rect x="367.37" y="305.99" width="7.96" height="7.96" fill="rgb(254,255,255)"/><rect x="375.04" y="305.99" width="7.96" height="7.96" fill="rgb(252,255,255)"/><rect x="382.70" y="305.99" width="7.96" height="7.96" fill="rgb(252,255,255)"/><rect x="390.36" y="305.99" width="7.96" height="7.96" fill="rgb(254,255,255)"/><rect x="398.03" y="305.99" width="7.96" height="7.96" fill="rgb(254,255,255)"/><rect x="405.69" y="305.99" width="7.96" height="7.96" fill="rgb(254,255,255)"/><rect x="413.36" y="305.99" width="7.96" height="7.96" fill="rgb(254,255,255)"/><rect x="421.02" y="305.99" width="7.96" height="7.96" fill="rgb(254,255,255)"/><rect x="428.68" y="305.99" width="7.96" height="7.96" fill="rgb(254,255,255)"/><rect x="436.35" y="305.99" width="7.96" height="7.96" fill="rgb(255,255,255)"/><rect x="444.01" y="305.99" width="7.96" height="7.96" fill="rgb(246,248,252)"/><rect x="451.68" y="305.99" width="7.96" height="7.96" fill="rgb(177,189,227)"/><rect x="459.34" y="305.99" width="7.96" height="7.96" fill="rgb(151,165,212)"/><rect x="467.00" y="305.99" width="7.96" height="7.96" fill="rgb(113,129,183)"/><rect x="474.67" y="305.99" width="7.96" height="7.96" fill="rgb(107,123,179)"/><rect x="482.33" y="305.99" width="7.96" height="7.96" fill="rgb(112,127,182)"/><rect x="490.00" y="305.99" width="7.96" height="7.96" fill="rgb(67,97,134)"/><rect x="497.66" y="305.99" width="7.96" height="7.96" fill="rgb(61,77,137)"/><rect x="505.32" y="305.99" width="7.96" height="7.96" fill="rgb(54,70,127)"/><rect x="512.99" y="305.99" width="7.96" height="7.96" fill="rgb(49,64,116)"/><rect x="520.65" y="305.99" width="7.96" height="7.96" fill="rgb(42,70,94)"/><rect x="528.32" y="305.99" width="7.96" height="7.96" fill="rgb(43,57,104)"/><rect x="535.98" y="305.99" width="7.96" height="7.96" fill="rgb(32,44,80)"/><rect x="543.64" y="305.99" width="7.96" height="7.96" fill="rgb(34,47,85)"/><rect x="551.31" y="305.99" width="7.96" height="7.96" fill="rgb(31,43,79)"/><rect x="558.97" y="305.99" width="7.96" height="7.96" fill="rgb(27,38,70)"/><rect x="566.64" y="305.99" width="7.96" height="7.96" fill="rgb(26,37,68)"/><rect x="574.30" y="305.99" width="7.96" height="7.96" fill="rgb(27,38,70)"/><rect x="581.96" y="305.99" width="7.96" height="7.96" fill="rgb(24,36,65)"/><rect x="589.63" y="305.99" width="7.96" height="7.96" fill="rgb(25,36,67)"/><rect x="597.29" y="305.99" width="7.96" height="7.96" fill="rgb(23,35,63)"/><rect x="612.62" y="305.99" width="7.96" height="7.96" fill="rgb(24,35,64)"/><rect x="229.42" y="313.66" width="7.96" height="7.96" fill="rgb(27,38,70)"/><rect x="237.08" y="313.66" width="7.96" height="7.96" fill="rgb(30,41,76)"/><rect x="244.75" y="313.66" width="7.96" height="7.96" fill="rgb(34,47,85)"/><rect x="252.41" y="313.66" width="7.96" height="7.96" fill="rgb(41,54,98)"/><rect x="260.08" y="313.66" width="7.96" height="7.96" fill="rgb(42,55,101)"/><rect x="267.74" y="313.66" width="7.96" height="7.96" fill="rgb(61,77,137)"/><rect x="275.40" y="313.66" width="7.96" height="7.96" fill="rgb(55,70,127)"/><rect x="283.07" y="313.66" width="7.96" height="7.96" fill="rgb(102,118,175)"/><rect x="290.73" y="313.66" width="7.96" height="7.96" fill="rgb(105,121,176)"/><rect x="298.40" y="313.66" width="7.96" height="7.96" fill="rgb(132,147,198)"/><rect x="306.06" y="313.66" width="7.96" height="7.96" fill="rgb(149,163,210)"/><rect x="313.72" y="313.66" width="7.96" height="7.96" fill="rgb(207,216,242)"/><rect x="321.39" y="313.66" width="7.96" height="7.96" fill="rgb(233,237,249)"/><rect x="329.05" y="313.66" width="7.96" height="7.96" fill="rgb(216,223,244)"/><rect x="336.72" y="313.66" width="7.96" height="7.96" fill="rgb(254,255,255)"/><rect x="344.38" y="313.66" width="7.96" height="7.96" fill="rgb(254,255,255)"/><rect x="352.04" y="313.66" width="7.96" height="7.96" fill="rgb(254,255,255)"/><rect x="359.71" y="313.66" width="7.96" height="7.96" fill="rgb(254,255,255)"/><rect x="367.37" y="313.66" width="7.96" height="7.96" fill="rgb(254,255,255)"/><rect x="375.04" y="313.66" width="7.96" height="7.96" fill="rgb(252,255,255)"/><rect x="382.70" y="313.66" width="7.96" height="7.96" fill="rgb(252,255,255)"/><rect x="390.36" y="313.66" width="7.96" height="7.96" fill="rgb(254,255,255)"/><rect x="398.03" y="313.66" width="7.96" height="7.96" fill="rgb(254,255,255)"/><rect x="405.69" y="313.66" width="7.96" height="7.96" fill="rgb(254,255,255)"/><rect x="413.36" y="313.66" width="7.96" height="7.96" fill="rgb(254,255,255)"/><rect x="421.02" y="313.66" width="7.96" height="7.96" fill="rgb(237,241,250)"/><rect x="428.68" y="313.66" width="7.96" height="7.96" fill="rgb(254,255,255)"/><rect x="436.35" y="313.66" width="7.96" height="7.96" fill="rgb(217,224,244)"/><rect x="444.01" y="313.66" width="7.96" height="7.96" fill="rgb(206,215,241)"/><rect x="451.68" y="313.66" width="7.96" height="7.96" fill="rgb(145,159,208)"/><rect x="459.34" y="313.66" width="7.96" height="7.96" fill="rgb(148,162,210)"/><rect x="467.00" y="313.66" width="7.96" height="7.96" fill="rgb(91,107,164)"/><rect x="474.67" y="313.66" width="7.96" height="7.96" fill="rgb(90,106,163)"/><rect x="482.33" y="313.66" width="7.96" height="7.96" fill="rgb(72,88,147)"/><rect x="490.00" y="313.66" width="7.96" height="7.96" fill="rgb(57,73,132)"/><rect x="497.66" y="313.66" width="7.96" height="7.96" fill="rgb(46,60,110)"/><rect x="505.32" y="313.66" width="7.96" height="7.96" fill="rgb(42,56,101)"/><rect x="512.99" y="313.66" width="7.96" height="7.96" fill="rgb(34,46,85)"/><rect x="520.65" y="313.66" width="7.96" height="7.96" fill="rgb(29,41,75)"/><rect x="528.32" y="313.66" width="7.96" height="7.96" fill="rgb(25,37,67)"/><rect x="535.98" y="313.66" width="7.96" height="7.96" fill="rgb(23,34,62)"/><rect x="221.76" y="321.32" width="7.96" height="7.96" fill="rgb(24,36,65)"/><rect x="229.42" y="321.32" width="7.96" height="7.96" fill="rgb(24,35,65)"/><rect x="237.08" y="321.32" width="7.96" height="7.96" fill="rgb(30,42,77)"/><rect x="244.75" y="321.32" width="7.96" height="7.96" fill="rgb(34,46,85)"/><rect x="252.41" y="321.32" width="7.96" height="7.96" fill="rgb(40,53,97)"/><rect x="260.08" y="321.32" width="7.96" height="7.96" fill="rgb(46,60,110)"/><rect x="267.74" y="321.32" width="7.96" height="7.96" fill="rgb(54,70,127)"/><rect x="275.40" y="321.32" width="7.96" height="7.96" fill="rgb(84,100,157)"/><rect x="283.07" y="321.32" width="7.96" height="7.96" fill="rgb(88,104,161)"/><rect x="290.73" y="321.32" width="7.96" height="7.96" fill="rgb(108,124,179)"/><rect x="298.40" y="321.32" width="7.96" height="7.96" fill="rgb(138,152,202)"/><rect x="306.06" y="321.32" width="7.96" height="7.96" fill="rgb(137,151,201)"/><rect x="313.72" y="321.32" width="7.96" height="7.96" fill="rgb(180,192,229)"/><rect x="321.39" y="321.32" width="7.96" height="7.96" fill="rgb(199,209,239)"/><rect x="329.05" y="321.32" width="7.96" height="7.96" fill="rgb(249,251,253)"/><rect x="336.72" y="321.32" width="7.96" height="7.96" fill="rgb(254,255,255)"/><rect x="344.38" y="321.32" width="7.96" height="7.96" fill="rgb(254,255,255)"/><rect x="352.04" y="321.32" width="7.96" height="7.96" fill="rgb(254,255,255)"/><rect x="359.71" y="321.32" width="7.96" height="7.96" fill="rgb(254,255,255)"/><rect x="367.37" y="321.32" width="7.96" height="7.96" fill="rgb(254,255,255)"/><rect x="375.04" y="321.32" width="7.96" height="7.96" fill="rgb(252,255,255)"/><rect x="382.70" y="321.32" width="7.96" height="7.96" fill="rgb(252,255,255)"/><rect x="390.36" y="321.32" width="7.96" height="7.96" fill="rgb(254,255,255)"/><rect x="398.03" y="321.32" width="7.96" height="7.96" fill="rgb(254,255,255)"/><rect x="405.69" y="321.32" width="7.96" height="7.96" fill="rgb(254,255,255)"/><rect x="413.36" y="321.32" width="7.96" height="7.96" fill="rgb(254,255,255)"/><rect x="421.02" y="321.32" width="7.96" height="7.96" fill="rgb(247,249,253)"/><rect x="428.68" y="321.32" width="7.96" height="7.96" fill="rgb(209,217,242)"/><rect x="436.35" y="321.32" width="7.96" height="7.96" fill="rgb(185,196,231)"/><rect x="444.01" y="321.32" width="7.96" height="7.96" fill="rgb(155,169,214)"/><rect x="451.68" y="321.32" width="7.96" height="7.96" fill="rgb(137,151,201)"/><rect x="459.34" y="321.32" width="7.96" height="7.96" fill="rgb(134,149,199)"/><rect x="467.00" y="321.32" width="7.96" height="7.96" fill="rgb(89,105,162)"/><rect x="474.67" y="321.32" width="7.96" height="7.96" fill="rgb(89,105,162)"/><rect x="482.33" y="321.32" width="7.96" height="7.96" fill="rgb(69,85,144)"/><rect x="490.00" y="321.32" width="7.96" height="7.96" fill="rgb(61,77,136)"/><rect x="497.66" y="321.32" width="7.96" height="7.96" fill="rgb(44,72,98)"/><rect x="505.32" y="321.32" width="7.96" height="7.96" fill="rgb(39,66,86)"/><rect x="512.99" y="321.32" width="7.96" height="7.96" fill="rgb(34,46,84)"/><rect x="520.65" y="321.32" width="7.96" height="7.96" fill="rgb(30,42,76)"/><rect x="528.32" y="321.32" width="7.96" height="7.96" fill="rgb(26,38,69)"/><rect x="535.98" y="321.32" width="7.96" height="7.96" fill="rgb(23,34,62)"/><rect x="168.11" y="328.98" width="7.96" height="7.96" fill="rgb(24,49,56)"/><rect x="183.44" y="328.98" width="7.96" height="7.96" fill="rgb(23,34,63)"/><rect x="191.10" y="328.98" width="7.96" height="7.96" fill="rgb(24,35,64)"/><rect x="198.76" y="328.98" width="7.96" height="7.96" fill="rgb(24,35,64)"/><rect x="206.43" y="328.98" width="7.96" height="7.96" fill="rgb(26,37,68)"/><rect x="214.09" y="328.98" width="7.96" height="7.96" fill="rgb(25,36,67)"/><rect x="221.76" y="328.98" width="7.96" height="7.96" fill="rgb(28,40,73)"/><rect x="229.42" y="328.98" width="7.96" height="7.96" fill="rgb(29,40,74)"/><rect x="237.08" y="328.98" width="7.96" height="7.96" fill="rgb(30,42,77)"/><rect x="244.75" y="328.98" width="7.96" height="7.96" fill="rgb(38,51,93)"/><rect x="252.41" y="328.98" width="7.96" height="7.96" fill="rgb(42,55,101)"/><rect x="260.08" y="328.98" width="7.96" height="7.96" fill="rgb(43,57,103)"/><rect x="267.74" y="328.98" width="7.96" height="7.96" fill="rgb(54,70,127)"/><rect x="275.40" y="328.98" width="7.96" height="7.96" fill="rgb(56,72,131)"/><rect x="283.07" y="328.98" width="7.96" height="7.96" fill="rgb(82,98,156)"/><rect x="290.73" y="328.98" width="7.96" height="7.96" fill="rgb(85,101,158)"/><rect x="298.40" y="328.98" width="7.96" height="7.96" fill="rgb(123,138,191)"/><rect x="306.06" y="328.98" width="7.96" height="7.96" fill="rgb(164,177,219)"/><rect x="313.72" y="328.98" width="7.96" height="7.96" fill="rgb(169,181,222)"/><rect x="321.39" y="328.98" width="7.96" height="7.96" fill="rgb(177,189,227)"/><rect x="329.05" y="328.98" width="7.96" height="7.96" fill="rgb(255,255,255)"/><rect x="336.72" y="328.98" width="7.96" height="7.96" fill="rgb(255,255,255)"/><rect x="344.38" y="328.98" width="7.96" height="7.96" fill="rgb(255,255,255)"/><rect x="352.04" y="328.98" width="7.96" height="7.96" fill="rgb(255,255,255)"/><rect x="359.71" y="328.98" width="7.96" height="7.96" fill="rgb(255,255,255)"/><rect x="367.37" y="328.98" width="7.96" height="7.96" fill="rgb(255,255,255)"/><rect x="375.04" y="328.98" width="7.96" height="7.96" fill="rgb(255,255,255)"/><rect x="382.70" y="328.98" width="7.96" height="7.96" fill="rgb(255,255,255)"/><rect x="390.36" y="328.98" width="7.96" height="7.96" fill="rgb(255,255,255)"/><rect x="398.03" y="328.98" width="7.96" height="7.96" fill="rgb(255,255,255)"/><rect x="405.69" y="328.98" width="7.96" height="7.96" fill="rgb(255,255,255)"/><rect x="413.36" y="328.98" width="7.96" height="7.96" fill="rgb(255,255,255)"/><rect x="421.02" y="328.98" width="7.96" height="7.96" fill="rgb(255,255,255)"/><rect x="428.68" y="328.98" width="7.96" height="7.96" fill="rgb(255,255,255)"/><rect x="436.35" y="328.98" width="7.96" height="7.96" fill="rgb(174,186,225)"/><rect x="444.01" y="328.98" width="7.96" height="7.96" fill="rgb(184,195,231)"/><rect x="451.68" y="328.98" width="7.96" height="7.96" fill="rgb(128,143,195)"/><rect x="459.34" y="328.98" width="7.96" height="7.96" fill="rgb(96,112,169)"/><rect x="467.00" y="328.98" width="7.96" height="7.96" fill="rgb(106,122,177)"/><rect x="474.67" y="328.98" width="7.96" height="7.96" fill="rgb(73,89,148)"/><rect x="482.33" y="328.98" width="7.96" height="7.96" fill="rgb(64,80,139)"/><rect x="490.00" y="328.98" width="7.96" height="7.96" fill="rgb(49,63,115)"/><rect x="497.66" y="328.98" width="7.96" height="7.96" fill="rgb(41,55,100)"/><rect x="505.32" y="328.98" width="7.96" height="7.96" fill="rgb(40,53,97)"/><rect x="512.99" y="328.98" width="7.96" height="7.96" fill="rgb(31,43,78)"/><rect x="520.65" y="328.98" width="7.96" height="7.96" fill="rgb(34,46,84)"/><rect x="528.32" y="328.98" width="7.96" height="7.96" fill="rgb(29,40,74)"/><rect x="535.98" y="328.98" width="7.96" height="7.96" fill="rgb(27,38,70)"/><rect x="543.64" y="328.98" width="7.96" height="7.96" fill="rgb(28,40,72)"/><rect x="551.31" y="328.98" width="7.96" height="7.96" fill="rgb(27,39,71)"/><rect x="558.97" y="328.98" width="7.96" height="7.96" fill="rgb(23,34,63)"/><rect x="566.64" y="328.98" width="7.96" height="7.96" fill="rgb(23,35,63)"/><rect x="581.96" y="328.98" width="7.96" height="7.96" fill="rgb(24,35,65)"/><rect x="252.41" y="336.65" width="7.96" height="7.96" fill="rgb(24,35,64)"/><rect x="260.08" y="336.65" width="7.96" height="7.96" fill="rgb(27,39,71)"/><rect x="267.74" y="336.65" width="7.96" height="7.96" fill="rgb(31,43,78)"/><rect x="275.40" y="336.65" width="7.96" height="7.96" fill="rgb(33,45,83)"/><rect x="283.07" y="336.65" width="7.96" height="7.96" fill="rgb(43,56,103)"/><rect x="290.73" y="336.65" width="7.96" height="7.96" fill="rgb(54,69,125)"/><rect x="298.40" y="336.65" width="7.96" height="7.96" fill="rgb(75,91,150)"/><rect x="306.06" y="336.65" width="7.96" height="7.96" fill="rgb(95,111,168)"/><rect x="313.72" y="336.65" width="7.96" height="7.96" fill="rgb(116,132,185)"/><rect x="321.39" y="336.65" width="7.96" height="7.96" fill="rgb(159,172,216)"/><rect x="329.05" y="336.65" width="7.96" height="7.96" fill="rgb(164,177,219)"/><rect x="336.72" y="336.65" width="7.96" height="7.96" fill="rgb(208,217,242)"/><rect x="344.38" y="336.65" width="7.96" height="7.96" fill="rgb(255,255,255)"/><rect x="352.04" y="336.65" width="7.96" height="7.96" fill="rgb(255,255,255)"/><rect x="359.71" y="336.65" width="7.96" height="7.96" fill="rgb(255,255,255)"/><rect x="367.37" y="336.65" width="7.96" height="7.96" fill="rgb(255,255,255)"/><rect x="375.04" y="336.65" width="7.96" height="7.96" fill="rgb(255,255,255)"/><rect x="382.70" y="336.65" width="7.96" height="7.96" fill="rgb(255,255,255)"/><rect x="390.36" y="336.65" width="7.96" height="7.96" fill="rgb(255,255,255)"/><rect x="398.03" y="336.65" width="7.96" height="7.96" fill="rgb(255,255,255)"/><rect x="405.69" y="336.65" width="7.96" height="7.96" fill="rgb(255,255,255)"/><rect x="413.36" y="336.65" width="7.96" height="7.96" fill="rgb(255,255,255)"/><rect x="421.02" y="336.65" width="7.96" height="7.96" fill="rgb(235,239,249)"/><rect x="428.68" y="336.65" width="7.96" height="7.96" fill="rgb(213,221,243)"/><rect x="436.35" y="336.65" width="7.96" height="7.96" fill="rgb(126,141,193)"/><rect x="444.01" y="336.65" width="7.96" height="7.96" fill="rgb(121,136,189)"/><rect x="451.68" y="336.65" width="7.96" height="7.96" fill="rgb(104,120,176)"/><rect x="459.34" y="336.65" width="7.96" height="7.96" fill="rgb(73,89,147)"/><rect x="467.00" y="336.65" width="7.96" height="7.96" fill="rgb(50,65,119)"/><rect x="474.67" y="336.65" width="7.96" height="7.96" fill="rgb(44,58,106)"/><rect x="482.33" y="336.65" width="7.96" height="7.96" fill="rgb(37,50,92)"/><rect x="490.00" y="336.65" width="7.96" height="7.96" fill="rgb(28,40,73)"/><rect x="497.66" y="336.65" width="7.96" height="7.96" fill="rgb(25,36,66)"/><rect x="505.32" y="336.65" width="7.96" height="7.96" fill="rgb(24,35,65)"/><rect x="260.08" y="344.31" width="7.96" height="7.96" fill="rgb(24,35,64)"/><rect x="267.74" y="344.31" width="7.96" height="7.96" fill="rgb(27,39,71)"/><rect x="275.40" y="344.31" width="7.96" height="7.96" fill="rgb(35,48,87)"/><rect x="283.07" y="344.31" width="7.96" height="7.96" fill="rgb(34,61,78)"/><rect x="290.73" y="344.31" width="7.96" height="7.96" fill="rgb(45,73,99)"/><rect x="298.40" y="344.31" width="7.96" height="7.96" fill="rgb(51,66,120)"/><rect x="306.06" y="344.31" width="7.96" height="7.96" fill="rgb(66,82,141)"/><rect x="313.72" y="344.31" width="7.96" height="7.96" fill="rgb(85,115,150)"/><rect x="321.39" y="344.31" width="7.96" height="7.96" fill="rgb(98,114,170)"/><rect x="329.05" y="344.31" width="7.96" height="7.96" fill="rgb(176,188,226)"/><rect x="336.72" y="344.31" width="7.96" height="7.96" fill="rgb(168,180,221)"/><rect x="344.38" y="344.31" width="7.96" height="7.96" fill="rgb(255,255,255)"/><rect x="352.04" y="344.31" width="7.96" height="7.96" fill="rgb(255,255,255)"/><rect x="359.71" y="344.31" width="7.96" height="7.96" fill="rgb(255,255,255)"/><rect x="367.37" y="344.31" width="7.96" height="7.96" fill="rgb(255,255,255)"/><rect x="375.04" y="344.31" width="7.96" height="7.96" fill="rgb(255,255,255)"/><rect x="382.70" y="344.31" width="7.96" height="7.96" fill="rgb(255,255,255)"/><rect x="390.36" y="344.31" width="7.96" height="7.96" fill="rgb(255,255,255)"/><rect x="398.03" y="344.31" width="7.96" height="7.96" fill="rgb(255,255,255)"/><rect x="405.69" y="344.31" width="7.96" height="7.96" fill="rgb(255,255,255)"/><rect x="413.36" y="344.31" width="7.96" height="7.96" fill="rgb(234,238,249)"/><rect x="421.02" y="344.31" width="7.96" height="7.96" fill="rgb(204,213,241)"/><rect x="428.68" y="344.31" width="7.96" height="7.96" fill="rgb(139,154,203)"/><rect x="436.35" y="344.31" width="7.96" height="7.96" fill="rgb(107,123,178)"/><rect x="444.01" y="344.31" width="7.96" height="7.96" fill="rgb(89,105,162)"/><rect x="451.68" y="344.31" width="7.96" height="7.96" fill="rgb(59,75,135)"/><rect x="459.34" y="344.31" width="7.96" height="7.96" fill="rgb(56,71,130)"/><rect x="467.00" y="344.31" width="7.96" height="7.96" fill="rgb(42,55,101)"/><rect x="474.67" y="344.31" width="7.96" height="7.96" fill="rgb(42,55,100)"/><rect x="482.33" y="344.31" width="7.96" height="7.96" fill="rgb(29,41,75)"/><rect x="490.00" y="344.31" width="7.96" height="7.96" fill="rgb(29,40,74)"/><rect x="497.66" y="344.31" width="7.96" height="7.96" fill="rgb(23,34,62)"/><rect x="505.32" y="344.31" width="7.96" height="7.96" fill="rgb(23,34,62)"/><rect x="267.74" y="351.98" width="7.96" height="7.96" fill="rgb(25,36,66)"/><rect x="275.40" y="351.98" width="7.96" height="7.96" fill="rgb(31,42,78)"/><rect x="283.07" y="351.98" width="7.96" height="7.96" fill="rgb(35,48,87)"/><rect x="290.73" y="351.98" width="7.96" height="7.96" fill="rgb(38,51,92)"/><rect x="298.40" y="351.98" width="7.96" height="7.96" fill="rgb(53,82,116)"/><rect x="306.06" y="351.98" width="7.96" height="7.96" fill="rgb(51,66,119)"/><rect x="313.72" y="351.98" width="7.96" height="7.96" fill="rgb(76,92,150)"/><rect x="321.39" y="351.98" width="7.96" height="7.96" fill="rgb(105,121,177)"/><rect x="329.05" y="351.98" width="7.96" height="7.96" fill="rgb(102,118,174)"/><rect x="336.72" y="351.98" width="7.96" height="7.96" fill="rgb(161,174,217)"/><rect x="344.38" y="351.98" width="7.96" height="7.96" fill="rgb(185,196,231)"/><rect x="352.04" y="351.98" width="7.96" height="7.96" fill="rgb(255,255,255)"/><rect x="359.71" y="351.98" width="7.96" height="7.96" fill="rgb(255,255,255)"/><rect x="367.37" y="351.98" width="7.96" height="7.96" fill="rgb(255,255,255)"/><rect x="375.04" y="351.98" width="7.96" height="7.96" fill="rgb(255,255,255)"/><rect x="382.70" y="351.98" width="7.96" height="7.96" fill="rgb(255,255,255)"/><rect x="390.36" y="351.98" width="7.96" height="7.96" fill="rgb(255,255,255)"/><rect x="398.03" y="351.98" width="7.96" height="7.96" fill="rgb(255,255,255)"/><rect x="405.69" y="351.98" width="7.96" height="7.96" fill="rgb(255,255,255)"/><rect x="413.36" y="351.98" width="7.96" height="7.96" fill="rgb(155,168,214)"/><rect x="421.02" y="351.98" width="7.96" height="7.96" fill="rgb(122,137,190)"/><rect x="428.68" y="351.98" width="7.96" height="7.96" fill="rgb(104,120,176)"/><rect x="436.35" y="351.98" width="7.96" height="7.96" fill="rgb(85,101,158)"/><rect x="444.01" y="351.98" width="7.96" height="7.96" fill="rgb(77,93,152)"/><rect x="451.68" y="351.98" width="7.96" height="7.96" fill="rgb(57,73,132)"/><rect x="459.34" y="351.98" width="7.96" height="7.96" fill="rgb(43,57,103)"/><rect x="467.00" y="351.98" width="7.96" height="7.96" fill="rgb(36,49,90)"/><rect x="474.67" y="351.98" width="7.96" height="7.96" fill="rgb(30,41,76)"/><rect x="482.33" y="351.98" width="7.96" height="7.96" fill="rgb(30,56,69)"/><rect x="490.00" y="351.98" width="7.96" height="7.96" fill="rgb(26,38,69)"/><rect x="275.40" y="359.64" width="7.96" height="7.96" fill="rgb(26,38,69)"/><rect x="283.07" y="359.64" width="7.96" height="7.96" fill="rgb(29,41,74)"/><rect x="290.73" y="359.64" width="7.96" height="7.96" fill="rgb(32,44,81)"/><rect x="298.40" y="359.64" width="7.96" height="7.96" fill="rgb(42,56,101)"/><rect x="306.06" y="359.64" width="7.96" height="7.96" fill="rgb(45,59,108)"/><rect x="313.72" y="359.64" width="7.96" height="7.96" fill="rgb(47,62,112)"/><rect x="321.39" y="359.64" width="7.96" height="7.96" fill="rgb(56,72,131)"/><rect x="329.05" y="359.64" width="7.96" height="7.96" fill="rgb(91,107,164)"/><rect x="336.72" y="359.64" width="7.96" height="7.96" fill="rgb(104,120,176)"/><rect x="344.38" y="359.64" width="7.96" height="7.96" fill="rgb(114,129,183)"/><rect x="352.04" y="359.64" width="7.96" height="7.96" fill="rgb(166,179,220)"/><rect x="359.71" y="359.64" width="7.96" height="7.96" fill="rgb(238,241,250)"/><rect x="367.37" y="359.64" width="7.96" height="7.96" fill="rgb(255,255,255)"/><rect x="375.04" y="359.64" width="7.96" height="7.96" fill="rgb(255,255,255)"/><rect x="382.70" y="359.64" width="7.96" height="7.96" fill="rgb(255,255,255)"/><rect x="390.36" y="359.64" width="7.96" height="7.96" fill="rgb(241,243,251)"/><rect x="398.03" y="359.64" width="7.96" height="7.96" fill="rgb(199,209,239)"/><rect x="405.69" y="359.64" width="7.96" height="7.96" fill="rgb(168,181,222)"/><rect x="413.36" y="359.64" width="7.96" height="7.96" fill="rgb(117,132,186)"/><rect x="421.02" y="359.64" width="7.96" height="7.96" fill="rgb(130,145,196)"/><rect x="428.68" y="359.64" width="7.96" height="7.96" fill="rgb(81,97,155)"/><rect x="436.35" y="359.64" width="7.96" height="7.96" fill="rgb(82,98,156)"/><rect x="444.01" y="359.64" width="7.96" height="7.96" fill="rgb(48,62,113)"/><rect x="451.68" y="359.64" width="7.96" height="7.96" fill="rgb(52,81,113)"/><rect x="459.34" y="359.64" width="7.96" height="7.96" fill="rgb(42,56,101)"/><rect x="467.00" y="359.64" width="7.96" height="7.96" fill="rgb(32,44,81)"/><rect x="474.67" y="359.64" width="7.96" height="7.96" fill="rgb(28,40,73)"/><rect x="482.33" y="359.64" width="7.96" height="7.96" fill="rgb(24,35,65)"/><rect x="490.00" y="359.64" width="7.96" height="7.96" fill="rgb(23,34,63)"/><rect x="283.07" y="367.30" width="7.96" height="7.96" fill="rgb(26,37,68)"/><rect x="290.73" y="367.30" width="7.96" height="7.96" fill="rgb(27,39,71)"/><rect x="298.40" y="367.30" width="7.96" height="7.96" fill="rgb(31,43,78)"/><rect x="306.06" y="367.30" width="7.96" height="7.96" fill="rgb(34,46,85)"/><rect x="313.72" y="367.30" width="7.96" height="7.96" fill="rgb(47,62,112)"/><rect x="321.39" y="367.30" width="7.96" height="7.96" fill="rgb(44,58,106)"/><rect x="329.05" y="367.30" width="7.96" height="7.96" fill="rgb(68,84,144)"/><rect x="336.72" y="367.30" width="7.96" height="7.96" fill="rgb(82,98,155)"/><rect x="344.38" y="367.30" width="7.96" height="7.96" fill="rgb(104,120,176)"/><rect x="352.04" y="367.30" width="7.96" height="7.96" fill="rgb(110,125,180)"/><rect x="359.71" y="367.30" width="7.96" height="7.96" fill="rgb(140,154,204)"/><rect x="367.37" y="367.30" width="7.96" height="7.96" fill="rgb(167,180,221)"/><rect x="375.04" y="367.30" width="7.96" height="7.96" fill="rgb(227,232,247)"/><rect x="382.70" y="367.30" width="7.96" height="7.96" fill="rgb(243,245,251)"/><rect x="390.36" y="367.30" width="7.96" height="7.96" fill="rgb(173,185,224)"/><rect x="398.03" y="367.30" width="7.96" height="7.96" fill="rgb(160,173,217)"/><rect x="405.69" y="367.30" width="7.96" height="7.96" fill="rgb(126,141,193)"/><rect x="413.36" y="367.30" width="7.96" height="7.96" fill="rgb(111,126,181)"/><rect x="421.02" y="367.30" width="7.96" height="7.96" fill="rgb(63,79,138)"/><rect x="428.68" y="367.30" width="7.96" height="7.96" fill="rgb(50,65,118)"/><rect x="436.35" y="367.30" width="7.96" height="7.96" fill="rgb(51,66,120)"/><rect x="444.01" y="367.30" width="7.96" height="7.96" fill="rgb(38,51,92)"/><rect x="451.68" y="367.30" width="7.96" height="7.96" fill="rgb(37,50,91)"/><rect x="459.34" y="367.30" width="7.96" height="7.96" fill="rgb(33,45,83)"/><rect x="467.00" y="367.30" width="7.96" height="7.96" fill="rgb(28,40,73)"/><rect x="474.67" y="367.30" width="7.96" height="7.96" fill="rgb(23,34,63)"/><rect x="290.73" y="374.97" width="7.96" height="7.96" fill="rgb(23,48,54)"/><rect x="298.40" y="374.97" width="7.96" height="7.96" fill="rgb(26,37,68)"/><rect x="306.06" y="374.97" width="7.96" height="7.96" fill="rgb(28,39,72)"/><rect x="313.72" y="374.97" width="7.96" height="7.96" fill="rgb(30,42,77)"/><rect x="321.39" y="374.97" width="7.96" height="7.96" fill="rgb(35,48,87)"/><rect x="329.05" y="374.97" width="7.96" height="7.96" fill="rgb(43,57,103)"/><rect x="336.72" y="374.97" width="7.96" height="7.96" fill="rgb(52,67,123)"/><rect x="344.38" y="374.97" width="7.96" height="7.96" fill="rgb(74,90,149)"/><rect x="352.04" y="374.97" width="7.96" height="7.96" fill="rgb(98,114,171)"/><rect x="359.71" y="374.97" width="7.96" height="7.96" fill="rgb(122,137,189)"/><rect x="367.37" y="374.97" width="7.96" height="7.96" fill="rgb(129,144,195)"/><rect x="375.04" y="374.97" width="7.96" height="7.96" fill="rgb(158,171,215)"/><rect x="382.70" y="374.97" width="7.96" height="7.96" fill="rgb(162,175,218)"/><rect x="390.36" y="374.97" width="7.96" height="7.96" fill="rgb(117,132,186)"/><rect x="398.03" y="374.97" width="7.96" height="7.96" fill="rgb(109,125,180)"/><rect x="405.69" y="374.97" width="7.96" height="7.96" fill="rgb(72,88,146)"/><rect x="413.36" y="374.97" width="7.96" height="7.96" fill="rgb(57,72,132)"/><rect x="421.02" y="374.97" width="7.96" height="7.96" fill="rgb(56,72,131)"/><rect x="428.68" y="374.97" width="7.96" height="7.96" fill="rgb(44,58,105)"/><rect x="436.35" y="374.97" width="7.96" height="7.96" fill="rgb(42,55,101)"/><rect x="444.01" y="374.97" width="7.96" height="7.96" fill="rgb(34,46,84)"/><rect x="451.68" y="374.97" width="7.96" height="7.96" fill="rgb(30,42,76)"/><rect x="459.34" y="374.97" width="7.96" height="7.96" fill="rgb(25,36,66)"/><rect x="467.00" y="374.97" width="7.96" height="7.96" fill="rgb(25,36,66)"/><rect x="306.06" y="382.63" width="7.96" height="7.96" fill="rgb(24,35,64)"/><rect x="313.72" y="382.63" width="7.96" height="7.96" fill="rgb(26,38,69)"/><rect x="321.39" y="382.63" width="7.96" height="7.96" fill="rgb(29,54,66)"/><rect x="329.05" y="382.63" width="7.96" height="7.96" fill="rgb(34,46,84)"/><rect x="336.72" y="382.63" width="7.96" height="7.96" fill="rgb(34,46,85)"/><rect x="344.38" y="382.63" width="7.96" height="7.96" fill="rgb(46,61,110)"/><rect x="352.04" y="382.63" width="7.96" height="7.96" fill="rgb(51,66,120)"/><rect x="359.71" y="382.63" width="7.96" height="7.96" fill="rgb(66,82,141)"/><rect x="367.37" y="382.63" width="7.96" height="7.96" fill="rgb(75,91,149)"/><rect x="375.04" y="382.63" width="7.96" height="7.96" fill="rgb(78,94,152)"/><rect x="382.70" y="382.63" width="7.96" height="7.96" fill="rgb(66,82,142)"/><rect x="390.36" y="382.63" width="7.96" height="7.96" fill="rgb(65,81,140)"/><rect x="398.03" y="382.63" width="7.96" height="7.96" fill="rgb(55,71,128)"/><rect x="405.69" y="382.63" width="7.96" height="7.96" fill="rgb(58,74,134)"/><rect x="413.36" y="382.63" width="7.96" height="7.96" fill="rgb(44,58,106)"/><rect x="421.02" y="382.63" width="7.96" height="7.96" fill="rgb(36,48,88)"/><rect x="428.68" y="382.63" width="7.96" height="7.96" fill="rgb(34,47,85)"/><rect x="436.35" y="382.63" width="7.96" height="7.96" fill="rgb(27,52,62)"/><rect x="444.01" y="382.63" width="7.96" height="7.96" fill="rgb(25,36,66)"/><rect x="451.68" y="382.63" width="7.96" height="7.96" fill="rgb(23,34,62)"/><rect x="321.39" y="390.30" width="7.96" height="7.96" fill="rgb(23,34,62)"/><rect x="329.05" y="390.30" width="7.96" height="7.96" fill="rgb(25,36,67)"/><rect x="336.72" y="390.30" width="7.96" height="7.96" fill="rgb(28,39,72)"/><rect x="344.38" y="390.30" width="7.96" height="7.96" fill="rgb(32,44,80)"/><rect x="352.04" y="390.30" width="7.96" height="7.96" fill="rgb(31,43,78)"/><rect x="359.71" y="390.30" width="7.96" height="7.96" fill="rgb(33,45,82)"/><rect x="367.37" y="390.30" width="7.96" height="7.96" fill="rgb(41,54,99)"/><rect x="375.04" y="390.30" width="7.96" height="7.96" fill="rgb(38,52,94)"/><rect x="382.70" y="390.30" width="7.96" height="7.96" fill="rgb(46,60,109)"/><rect x="390.36" y="390.30" width="7.96" height="7.96" fill="rgb(36,48,88)"/><rect x="398.03" y="390.30" width="7.96" height="7.96" fill="rgb(39,52,94)"/><rect x="405.69" y="390.30" width="7.96" height="7.96" fill="rgb(34,46,85)"/><rect x="413.36" y="390.30" width="7.96" height="7.96" fill="rgb(28,39,72)"/><rect x="421.02" y="390.30" width="7.96" height="7.96" fill="rgb(27,38,70)"/><rect x="428.68" y="390.30" width="7.96" height="7.96" fill="rgb(27,38,70)"/><rect x="436.35" y="390.30" width="7.96" height="7.96" fill="rgb(24,49,56)"/><rect x="344.38" y="397.96" width="7.96" height="7.96" fill="rgb(24,35,65)"/><rect x="352.04" y="397.96" width="7.96" height="7.96" fill="rgb(24,35,64)"/><rect x="359.71" y="397.96" width="7.96" height="7.96" fill="rgb(26,38,69)"/><rect x="367.37" y="397.96" width="7.96" height="7.96" fill="rgb(26,37,68)"/><rect x="375.04" y="397.96" width="7.96" height="7.96" fill="rgb(25,36,66)"/><rect x="382.70" y="397.96" width="7.96" height="7.96" fill="rgb(27,38,70)"/><rect x="390.36" y="397.96" width="7.96" height="7.96" fill="rgb(27,38,70)"/><rect x="398.03" y="397.96" width="7.96" height="7.96" fill="rgb(25,36,67)"/><rect x="405.69" y="397.96" width="7.96" height="7.96" fill="rgb(23,34,63)"/><rect x="413.36" y="397.96" width="7.96" height="7.96" fill="rgb(23,34,63)"/><rect x="421.02" y="397.96" width="7.96" height="7.96" fill="rgb(23,34,63)"/></g><g shape-rendering="auto"><g filter="url(#blur4)" style="mix-blend-mode:screen"><path d="M392,342 L330,340 L298,338 L291,348 L291,388 L259,421" stroke="#7030a8" stroke-width="22" fill="none" opacity="0.45" stroke-linejoin="round"/><path d="M395,334 L420,341 L458,358 L484,368 L494,376 L496,395 L495,421" stroke="#7030a8" stroke-width="22" fill="none" opacity="0.45" stroke-linejoin="round"/></g><g filter="url(#blur1)"><path d="M300,351 C318,345 337,350 338,362 C339,374 318,378 300,373 Z" fill="#5860c8" opacity="0.85"/><path d="M286,344 C266,342 257,356 257,370 C257,386 272,392 286,388" stroke="#9a48d0" stroke-width="4.5" fill="none" opacity="0.9"/><path d="M298,349 C318,342 341,346 342,362 C343,378 320,382 298,376" stroke="#9a48d0" stroke-width="4.5" fill="none" opacity="0.9"/><path d="M345,341 L330,340 L298,338 L291,348 L291,388 L259,421" stroke="#a050d8" stroke-width="14" fill="none" opacity="0.9" stroke-linejoin="round" transform="translate(-2,1)"/><path d="M425,344 L458,358 L484,368 L494,376 L496,395 L495,421" stroke="#a050d8" stroke-width="13" fill="none" opacity="0.9" stroke-linejoin="round" transform="translate(-4,4)"/></g><path d="M392,342 L330,340 L298,338 L291,348 L291,388 L259,421" stroke="#f8dcff" stroke-width="9.5" fill="none" stroke-linejoin="round"/><path d="M395,334 L420,341 L458,358 L484,368 L494,376 L496,395 L495,421" stroke="#f8dcff" stroke-width="9.5" fill="none" stroke-linejoin="round"/></g><rect x="145.5" y="114.5" width="475" height="383" fill="none" stroke="#62a6f4" stroke-width="1"/><rect x="198.5" y="114.5" width="368" height="886" fill="none" stroke="#62a6f4" stroke-width="1"/><rect x="198" y="305" width="368" height="1" fill="#62a6f4"/><rect x="198" y="673" width="368" height="1" fill="#62a6f4"/><rect x="244.5" y="296.5" width="276" height="149" fill="none" stroke="#62a6f4" stroke-width="1"/><rect x="206.5" y="311.5" width="353" height="356" fill="none" stroke="#62a6f4" stroke-width="1"/><rect x="325.5" y="646.5" width="115" height="222" fill="none" stroke="#62a6f4" stroke-width="1"/><rect x="440.5" y="417.5" width="14" height="14" fill="#0d3858" stroke="#1b90e8" stroke-width="1.2"/><rect x="382" y="400" width="1.3" height="75" fill="#22e622"/><polygon points="382.6,386 376,401 389.2,401" fill="#22e622" shape-rendering="auto"/><rect x="375.5" y="482.5" width="14" height="14" fill="none" stroke="#18d8e0" stroke-width="1.2"/><rect x="397" y="489" width="77" height="1.4" fill="#f01818"/><polygon points="487,489.7 473,483.5 473,496" fill="#f01818" shape-rendering="auto"/></g><rect x="22" y="47" width="1" height="890" fill="#b4b4b4"/><rect x="8" y="937" width="818" height="1" fill="#b4b4b4"/><rect x="8" y="899" width="14" height="1" fill="#b4b4b4"/><g clip-path="url(#rl)"><text x="0" y="0" transform="translate(19,896) rotate(-90)" font-family="Liberation Sans" font-size="9.5" letter-spacing="0.9" fill="#c8c8c8" shape-rendering="auto">20</text></g><rect x="8" y="822" width="14" height="1" fill="#b4b4b4"/><g clip-path="url(#rl)"><text x="0" y="0" transform="translate(19,819) rotate(-90)" font-family="Liberation Sans" font-size="9.5" letter-spacing="0.9" fill="#c8c8c8" shape-rendering="auto">40</text></g><rect x="8" y="746" width="14" height="1" fill="#b4b4b4"/><g clip-path="url(#rl)"><text x="0" y="0" transform="translate(19,743) rotate(-90)" font-family="Liberation Sans" font-size="9.5" letter-spacing="0.9" fill="#c8c8c8" shape-rendering="auto">60</text></g><rect x="8" y="669" width="14" height="1" fill="#b4b4b4"/><g clip-path="url(#rl)"><text x="0" y="0" transform="translate(19,666) rotate(-90)" font-family="Liberation Sans" font-size="9.5" letter-spacing="0.9" fill="#c8c8c8" shape-rendering="auto">80</text></g><rect x="8" y="592" width="14" height="1" fill="#b4b4b4"/><g clip-path="url(#rl)"><text x="0" y="0" transform="translate(19,589) rotate(-90)" font-family="Liberation Sans" font-size="9.5" letter-spacing="0.9" fill="#c8c8c8" shape-rendering="auto">100</text></g><rect x="8" y="516" width="14" height="1" fill="#b4b4b4"/><g clip-path="url(#rl)"><text x="0" y="0" transform="translate(19,513) rotate(-90)" font-family="Liberation Sans" font-size="9.5" letter-spacing="0.9" fill="#c8c8c8" shape-rendering="auto">120</text></g><rect x="8" y="439" width="14" height="1" fill="#b4b4b4"/><g clip-path="url(#rl)"><text x="0" y="0" transform="translate(19,436) rotate(-90)" font-family="Liberation Sans" font-size="9.5" letter-spacing="0.9" fill="#c8c8c8" shape-rendering="auto">140</text></g><rect x="8" y="362" width="14" height="1" fill="#b4b4b4"/><g clip-path="url(#rl)"><text x="0" y="0" transform="translate(19,359) rotate(-90)" font-family="Liberation Sans" font-size="9.5" letter-spacing="0.9" fill="#c8c8c8" shape-rendering="auto">160</text></g><rect x="8" y="286" width="14" height="1" fill="#b4b4b4"/><g clip-path="url(#rl)"><text x="0" y="0" transform="translate(19,283) rotate(-90)" font-family="Liberation Sans" font-size="9.5" letter-spacing="0.9" fill="#c8c8c8" shape-rendering="auto">180</text></g><rect x="8" y="209" width="14" height="1" fill="#b4b4b4"/><g clip-path="url(#rl)"><text x="0" y="0" transform="translate(19,206) rotate(-90)" font-family="Liberation Sans" font-size="9.5" letter-spacing="0.9" fill="#c8c8c8" shape-rendering="auto">200</text></g><rect x="8" y="133" width="14" height="1" fill="#b4b4b4"/><g clip-path="url(#rl)"><text x="0" y="0" transform="translate(19,130) rotate(-90)" font-family="Liberation Sans" font-size="9.5" letter-spacing="0.9" fill="#c8c8c8" shape-rendering="auto">220</text></g><rect x="8" y="56" width="14" height="1" fill="#b4b4b4"/><g clip-path="url(#rl)"><text x="0" y="0" transform="translate(19,53) rotate(-90)" font-family="Liberation Sans" font-size="9.5" letter-spacing="0.9" fill="#c8c8c8" shape-rendering="auto">240</text></g><rect x="76" y="937" width="1" height="15" fill="#b4b4b4"/><text x="79" y="948" font-family="Liberation Sans" font-size="9.5" letter-spacing="0.9" fill="#c8c8c8" shape-rendering="auto">280</text><rect x="152" y="937" width="1" height="15" fill="#b4b4b4"/><text x="155" y="948" font-family="Liberation Sans" font-size="9.5" letter-spacing="0.9" fill="#c8c8c8" shape-rendering="auto">300</text><rect x="229" y="937" width="1" height="15" fill="#b4b4b4"/><text x="232" y="948" font-family="Liberation Sans" font-size="9.5" letter-spacing="0.9" fill="#c8c8c8" shape-rendering="auto">320</text><rect x="306" y="937" width="1" height="15" fill="#b4b4b4"/><text x="309" y="948" font-family="Liberation Sans" font-size="9.5" letter-spacing="0.9" fill="#c8c8c8" shape-rendering="auto">340</text><rect x="382" y="937" width="1" height="15" fill="#b4b4b4"/><text x="385" y="948" font-family="Liberation Sans" font-size="9.5" letter-spacing="0.9" fill="#c8c8c8" shape-rendering="auto">360</text><rect x="459" y="937" width="1" height="15" fill="#b4b4b4"/><text x="462" y="948" font-family="Liberation Sans" font-size="9.5" letter-spacing="0.9" fill="#c8c8c8" shape-rendering="auto">380</text><rect x="536" y="937" width="1" height="15" fill="#b4b4b4"/><text x="539" y="948" font-family="Liberation Sans" font-size="9.5" letter-spacing="0.9" fill="#c8c8c8" shape-rendering="auto">400</text><rect x="612" y="937" width="1" height="15" fill="#b4b4b4"/><text x="615" y="948" font-family="Liberation Sans" font-size="9.5" letter-spacing="0.9" fill="#c8c8c8" shape-rendering="auto">420</text><rect x="689" y="937" width="1" height="15" fill="#b4b4b4"/><text x="692" y="948" font-family="Liberation Sans" font-size="9.5" letter-spacing="0.9" fill="#c8c8c8" shape-rendering="auto">440</text><rect x="765" y="937" width="1" height="15" fill="#b4b4b4"/><text x="768" y="948" font-family="Liberation Sans" font-size="9.5" letter-spacing="0.9" fill="#c8c8c8" shape-rendering="auto">460</text></svg>
<svg class="abs" style="left:10px;top:20px" width="16" height="11" viewBox="0 0 16 11"><path d="M4.3,0.3 H11.7 L13.2,4.7 H2.8 Z" fill="#72c4f5"/><path d="M2.6,5.5 H13.4 L15.8,7.4 V10.8 H0.2 V7.4 Z" fill="#72c4f5"/><rect x="7.5" y="7.3" width="1" height="3.5" fill="#2a5878" opacity="0.7"/><rect x="0.2" y="7" width="15.6" height="0.7" fill="#2a5878" opacity="0.5"/></svg><div class="t" style="left:31px;top:19px;color:#d7d8da;font-size:12.5px">main.collection</div><svg class="abs" style="left:120px;top:21px" width="10" height="10" viewBox="0 0 10 10"><path d="M1,1 L9,9 M9,1 L1,9" stroke="#85878a" stroke-width="1.3"/></svg><div class="abs" style="left:8px;top:45px;width:125px;height:2px;background:#f46f30"></div><div class="abs" style="left:401px;top:957px;width:32px;height:1px;background:#44464a"></div><div class="abs" style="left:401px;top:960px;width:32px;height:1px;background:#44464a"></div><div class="abs" style="left:831px;top:468px;width:1px;height:32px;background:#45474b"></div><div class="abs" style="left:834px;top:468px;width:1px;height:32px;background:#45474b"></div><div class="abs" style="left:837px;top:468px;width:1px;height:32px;background:#45474b"></div><div class="abs" style="left:843px;top:6px;width:483px;height:698px;background:#2c2f33"></div><div class="abs" style="left:843px;top:706px;width:483px;height:256px;background:#2c2f33"></div><div class="abs" style="left:1327px;top:0px;width:1px;height:967px;background:#b6bcc8"></div><div class="t" style="left:858px;top:20px;color:#c9cacc;font-size:12.6px">Outline</div><div class="abs" style="left:843px;top:213px;width:483px;height:23px;background:#383b40"></div><div class="abs" style="left:844px;top:213px;width:2px;height:23px;background:#f46f30"></div><svg class="abs" style="left:855.5px;top:59.0px" width="10" height="8" viewBox="0 0 10 8"><polygon points="0.6,1 9.4,1 5,7" fill="#bcc0c6"/></svg><svg class="abs" style="left:868.5px;top:57.5px" width="16" height="12" viewBox="0 0 16 12"><path d="M4.5,0.5 H11.5 L13,5 H3 Z" fill="#bcc0c6"/><path d="M3,5.8 H13 L15.5,8 V11.5 H0.5 V8 Z" fill="#bcc0c6"/><rect x="7.6" y="8" width="0.9" height="3.5" fill="#2c2f33" opacity="0.6"/><rect x="0.5" y="7.6" width="15" height="0.8" fill="#2c2f33" opacity="0.35"/></svg><div class="t" style="left:889px;top:57px;color:#d4d5d7;font-size:12.5px;">Collection</div><svg class="abs" style="left:868.5px;top:82.0px" width="10" height="8" viewBox="0 0 10 8"><polygon points="0.6,1 9.4,1 5,7" fill="#6a6d72"/></svg><svg class="abs" style="left:882.5px;top:79.5px" width="14" height="14" viewBox="0 0 14 14"><polygon points="7,0.8 12.9,3.8 12.9,10.2 7,13.2 1.1,10.2 1.1,3.8" fill="#6a6d72"/><path d="M1.6,4.1 L7,6.9 L12.4,4.1 M7,6.9 L7,12.8" stroke="#2c2f33" stroke-width="0.9" fill="none" opacity="0.55"/></svg><div class="t" style="left:902px;top:80px;color:#74777b;font-size:12.5px;">misc</div><svg class="abs" style="left:895.5px;top:102.5px" width="14" height="14" viewBox="0 0 14 14"><polygon points="7,1 13,9.6 7,12.6 1,9.6" fill="#6a6d72"/><polygon points="7,1 13,9.6 7,12.6" fill="#2c2f33" opacity="0.18"/></svg><div class="t" style="left:915px;top:103px;color:#74777b;font-size:12.5px;">background</div><svg class="abs" style="left:895.5px;top:125.5px" width="14" height="14" viewBox="0 0 14 14"><path d="M7,0.8 C9.3,3 9.6,6.5 9.2,10.5 H4.8 C4.4,6.5 4.7,3 7,0.8 Z" fill="#6a6d72"/><circle cx="7" cy="5.6" r="1.3" fill="#2c2f33"/><path d="M3.6,8 L1.6,11 L2.2,13.2 L4.4,11.5 Z M10.4,8 L12.4,11 L11.8,13.2 L9.6,11.5 Z" fill="#6a6d72"/><rect x="6.3" y="11" width="1.4" height="2.4" fill="#6a6d72"/></svg><div class="t" style="left:915px;top:126px;color:#74777b;font-size:12.5px;">lightning</div><svg class="abs" style="left:868.5px;top:151.0px" width="10" height="8" viewBox="0 0 10 8"><polygon points="0.6,1 9.4,1 5,7" fill="#bcc0c6"/></svg><svg class="abs" style="left:882.5px;top:148.5px" width="14" height="14" viewBox="0 0 14 14"><polygon points="7,0.8 12.9,3.8 12.9,10.2 7,13.2 1.1,10.2 1.1,3.8" fill="#bcc0c6"/><path d="M1.6,4.1 L7,6.9 L12.4,4.1 M7,6.9 L7,12.8" stroke="#2c2f33" stroke-width="0.9" fill="none" opacity="0.55"/></svg><div class="t" style="left:902px;top:149px;color:#d4d5d7;font-size:12.5px;">world_pivot</div><svg class="abs" style="left:882.5px;top:173.0px" width="8" height="10" viewBox="0 0 8 10"><polygon points="1,0.5 7,5 1,9.5" fill="#6a6d72"/></svg><svg class="abs" style="left:895.5px;top:171.5px" width="14" height="14" viewBox="0 0 14 14"><polygon points="7,0.8 12.9,3.8 12.9,10.2 7,13.2 1.1,10.2 1.1,3.8" fill="#6a6d72"/><path d="M1.6,4.1 L7,6.9 L12.4,4.1 M7,6.9 L7,12.8" stroke="#2c2f33" stroke-width="0.9" fill="none" opacity="0.55"/></svg><div class="t" style="left:915px;top:172px;color:#74777b;font-size:12.5px;">alienbig</div><svg class="abs" style="left:882.5px;top:196.0px" width="8" height="10" viewBox="0 0 8 10"><polygon points="1,0.5 7,5 1,9.5" fill="#6a6d72"/></svg><svg class="abs" style="left:895.5px;top:194.5px" width="14" height="14" viewBox="0 0 14 14"><polygon points="7,0.8 12.9,3.8 12.9,10.2 7,13.2 1.1,10.2 1.1,3.8" fill="#6a6d72"/><path d="M1.6,4.1 L7,6.9 L12.4,4.1 M7,6.9 L7,12.8" stroke="#2c2f33" stroke-width="0.9" fill="none" opacity="0.55"/></svg><div class="t" style="left:915px;top:195px;color:#74777b;font-size:12.5px;">aliensmall</div><svg class="abs" style="left:881.5px;top:220.0px" width="10" height="8" viewBox="0 0 10 8"><polygon points="0.6,1 9.4,1 5,7" fill="#bcc0c6"/></svg><svg class="abs" style="left:895.5px;top:217.5px" width="14" height="14" viewBox="0 0 14 14"><polygon points="7,0.8 12.9,3.8 12.9,10.2 7,13.2 1.1,10.2 1.1,3.8" fill="#bcc0c6"/><path d="M1.6,4.1 L7,6.9 L12.4,4.1 M7,6.9 L7,12.8" stroke="#2c2f33" stroke-width="0.9" fill="none" opacity="0.55"/></svg><div class="t" style="left:915px;top:218px;color:#d4d5d7;font-size:12.5px;">ship</div><svg class="abs" style="left:894.5px;top:243.0px" width="10" height="8" viewBox="0 0 10 8"><polygon points="0.6,1 9.4,1 5,7" fill="#bcc0c6"/></svg><svg class="abs" style="left:908.5px;top:240.5px" width="14" height="14" viewBox="0 0 14 14"><polygon points="7,0.8 12.9,3.8 12.9,10.2 7,13.2 1.1,10.2 1.1,3.8" fill="#bcc0c6"/><path d="M1.6,4.1 L7,6.9 L12.4,4.1 M7,6.9 L7,12.8" stroke="#2c2f33" stroke-width="0.9" fill="none" opacity="0.55"/></svg><div class="t" style="left:928px;top:241px;color:#d4d5d7;font-size:12.5px;">beam</div><svg class="abs" style="left:907.5px;top:266.0px" width="10" height="8" viewBox="0 0 10 8"><polygon points="0.6,1 9.4,1 5,7" fill="#bcc0c6"/></svg><svg class="abs" style="left:921.5px;top:263.5px" width="14" height="14" viewBox="0 0 14 14"><polygon points="7,0.8 12.9,3.8 12.9,10.2 7,13.2 1.1,10.2 1.1,3.8" fill="#bcc0c6"/><path d="M1.6,4.1 L7,6.9 L12.4,4.1 M7,6.9 L7,12.8" stroke="#2c2f33" stroke-width="0.9" fill="none" opacity="0.55"/></svg><div class="t" style="left:941px;top:264px;color:#d4d5d7;font-size:12.5px;">beam_end</div><svg class="abs" style="left:921.5px;top:288.0px" width="8" height="10" viewBox="0 0 8 10"><polygon points="1,0.5 7,5 1,9.5" fill="#6a6d72"/></svg><svg class="abs" style="left:934.5px;top:286.5px" width="14" height="14" viewBox="0 0 14 14"><circle cx="7" cy="2.6" r="2" fill="none" stroke="#6a6d72" stroke-width="1.3"/><path d="M3.4,4.4 H10.6 L12.8,12.6 H1.2 Z" fill="#6a6d72"/><circle cx="7" cy="8.4" r="3" fill="#2c2f33"/><path d="M7,5.9 A2.5,2.5 0 0 1 9.5,8.4 H7 Z M7,10.9 A2.5,2.5 0 0 1 4.5,8.4 H7 Z" fill="#6a6d72"/></svg><div class="t" style="left:954px;top:287px;color:#74777b;font-size:12.5px;">collisionobject</div><svg class="abs" style="left:934.5px;top:309.5px" width="14" height="14" viewBox="0 0 14 14"><circle cx="12.20" cy="7.00" r="1.55" fill="#bcc0c6"/><circle cx="10.68" cy="10.68" r="1.55" fill="#bcc0c6"/><circle cx="7.00" cy="12.20" r="1.55" fill="#bcc0c6"/><circle cx="3.32" cy="10.68" r="1.55" fill="#bcc0c6"/><circle cx="1.80" cy="7.00" r="1.55" fill="#bcc0c6"/><circle cx="3.32" cy="3.32" r="1.55" fill="#bcc0c6"/><circle cx="7.00" cy="1.80" r="1.55" fill="#bcc0c6"/><circle cx="10.68" cy="3.32" r="1.55" fill="#bcc0c6"/><circle cx="7" cy="7" r="4.7" fill="#bcc0c6"/><circle cx="7" cy="7" r="1.9" fill="#2c2f33"/></svg><div class="t" style="left:954px;top:310px;color:#d4d5d7;font-size:12.2px;font-style:italic;">target - /assets/mesh_system/scripts/target.script</div><svg class="abs" style="left:907.5px;top:335.0px" width="10" height="8" viewBox="0 0 10 8"><polygon points="0.6,1 9.4,1 5,7" fill="#bcc0c6"/></svg><svg class="abs" style="left:921.5px;top:332.5px" width="14" height="14" viewBox="0 0 14 14"><polygon points="7,0.8 12.9,3.8 12.9,10.2 7,13.2 1.1,10.2 1.1,3.8" fill="#bcc0c6"/><path d="M1.6,4.1 L7,6.9 L12.4,4.1 M7,6.9 L7,12.8" stroke="#2c2f33" stroke-width="0.9" fill="none" opacity="0.55"/></svg><div class="t" style="left:941px;top:333px;color:#d4d5d7;font-size:12.5px;">beam_start</div><svg class="abs" style="left:934.5px;top:355.5px" width="14" height="14" viewBox="0 0 14 14"><circle cx="12.20" cy="7.00" r="1.55" fill="#bcc0c6"/><circle cx="10.68" cy="10.68" r="1.55" fill="#bcc0c6"/><circle cx="7.00" cy="12.20" r="1.55" fill="#bcc0c6"/><circle cx="3.32" cy="10.68" r="1.55" fill="#bcc0c6"/><circle cx="1.80" cy="7.00" r="1.55" fill="#bcc0c6"/><circle cx="3.32" cy="3.32" r="1.55" fill="#bcc0c6"/><circle cx="7.00" cy="1.80" r="1.55" fill="#bcc0c6"/><circle cx="10.68" cy="3.32" r="1.55" fill="#bcc0c6"/><circle cx="7" cy="7" r="4.7" fill="#bcc0c6"/><circle cx="7" cy="7" r="1.9" fill="#2c2f33"/></svg><div class="t" style="left:954px;top:356px;color:#d4d5d7;font-size:12.2px;font-style:italic;">lazer - /assets/mesh_system/scripts/lazer.script</div><svg class="abs" style="left:934.5px;top:378.5px" width="14" height="14" viewBox="0 0 14 14"><polygon points="7,1 13,9.6 7,12.6 1,9.6" fill="#bcc0c6"/><polygon points="7,1 13,9.6 7,12.6" fill="#2c2f33" opacity="0.18"/></svg><div class="t" style="left:954px;top:379px;color:#d4d5d7;font-size:12.2px;font-style:italic;">lightning - /assets/mesh_system/mesh/lightning_beam.mesh</div><svg class="abs" style="left:895.5px;top:403.0px" width="8" height="10" viewBox="0 0 8 10"><polygon points="1,0.5 7,5 1,9.5" fill="#bcc0c6"/></svg><svg class="abs" style="left:908.5px;top:401.5px" width="14" height="14" viewBox="0 0 14 14"><polygon points="7,0.8 12.9,3.8 12.9,10.2 7,13.2 1.1,10.2 1.1,3.8" fill="#bcc0c6"/><path d="M1.6,4.1 L7,6.9 L12.4,4.1 M7,6.9 L7,12.8" stroke="#2c2f33" stroke-width="0.9" fill="none" opacity="0.55"/></svg><div class="t" style="left:928px;top:402px;color:#d4d5d7;font-size:12.5px;">flare</div><svg class="abs" style="left:895.5px;top:426.0px" width="8" height="10" viewBox="0 0 8 10"><polygon points="1,0.5 7,5 1,9.5" fill="#bcc0c6"/></svg><svg class="abs" style="left:908.5px;top:424.5px" width="14" height="14" viewBox="0 0 14 14"><polygon points="7,0.8 12.9,3.8 12.9,10.2 7,13.2 1.1,10.2 1.1,3.8" fill="#bcc0c6"/><path d="M1.6,4.1 L7,6.9 L12.4,4.1 M7,6.9 L7,12.8" stroke="#2c2f33" stroke-width="0.9" fill="none" opacity="0.55"/></svg><div class="t" style="left:928px;top:425px;color:#d4d5d7;font-size:12.5px;">flash</div><svg class="abs" style="left:895.5px;top:449.0px" width="8" height="10" viewBox="0 0 8 10"><polygon points="1,0.5 7,5 1,9.5" fill="#bcc0c6"/></svg><svg class="abs" style="left:908.5px;top:447.5px" width="14" height="14" viewBox="0 0 14 14"><polygon points="7,0.8 12.9,3.8 12.9,10.2 7,13.2 1.1,10.2 1.1,3.8" fill="#bcc0c6"/><path d="M1.6,4.1 L7,6.9 L12.4,4.1 M7,6.9 L7,12.8" stroke="#2c2f33" stroke-width="0.9" fill="none" opacity="0.55"/></svg><div class="t" style="left:928px;top:448px;color:#d4d5d7;font-size:12.5px;">fuse</div><svg class="abs" style="left:895.5px;top:472.0px" width="8" height="10" viewBox="0 0 8 10"><polygon points="1,0.5 7,5 1,9.5" fill="#bcc0c6"/></svg><svg class="abs" style="left:908.5px;top:470.5px" width="14" height="14" viewBox="0 0 14 14"><polygon points="7,0.8 12.9,3.8 12.9,10.2 7,13.2 1.1,10.2 1.1,3.8" fill="#bcc0c6"/><path d="M1.6,4.1 L7,6.9 L12.4,4.1 M7,6.9 L7,12.8" stroke="#2c2f33" stroke-width="0.9" fill="none" opacity="0.55"/></svg><div class="t" style="left:928px;top:471px;color:#d4d5d7;font-size:12.5px;">thrust</div><svg class="abs" style="left:908.5px;top:493.5px" width="14" height="14" viewBox="0 0 14 14"><circle cx="12.20" cy="7.00" r="1.55" fill="#bcc0c6"/><circle cx="10.68" cy="10.68" r="1.55" fill="#bcc0c6"/><circle cx="7.00" cy="12.20" r="1.55" fill="#bcc0c6"/><circle cx="3.32" cy="10.68" r="1.55" fill="#bcc0c6"/><circle cx="1.80" cy="7.00" r="1.55" fill="#bcc0c6"/><circle cx="3.32" cy="3.32" r="1.55" fill="#bcc0c6"/><circle cx="7.00" cy="1.80" r="1.55" fill="#bcc0c6"/><circle cx="10.68" cy="3.32" r="1.55" fill="#bcc0c6"/><circle cx="7" cy="7" r="4.7" fill="#bcc0c6"/><circle cx="7" cy="7" r="1.9" fill="#2c2f33"/></svg><div class="t" style="left:928px;top:494px;color:#d4d5d7;font-size:12.2px;font-style:italic;">controller - /assets/mesh_system/scripts/controller.script</div><svg class="abs" style="left:908.5px;top:516.5px" width="14" height="14" viewBox="0 0 14 14"><path d="M7,0.8 C9.3,3 9.6,6.5 9.2,10.5 H4.8 C4.4,6.5 4.7,3 7,0.8 Z" fill="#bcc0c6"/><circle cx="7" cy="5.6" r="1.3" fill="#2c2f33"/><path d="M3.6,8 L1.6,11 L2.2,13.2 L4.4,11.5 Z M10.4,8 L12.4,11 L11.8,13.2 L9.6,11.5 Z" fill="#bcc0c6"/><rect x="6.3" y="11" width="1.4" height="2.4" fill="#bcc0c6"/></svg><div class="t" style="left:928px;top:517px;color:#d4d5d7;font-size:12.5px;">ship</div><div class="abs" style="left:872px;top:212px;width:420px;height:327px;border:1px solid #1e9de0"></div><div class="t" style="left:858px;top:720px;color:#c9cacc">Properties</div><div class="t" style="left:858px;top:763px;color:#d4d5d7">Id</div><div class="abs" style="left:920px;top:756px;width:396px;height:27px;border:1px solid #45484d"></div><div class="t" style="left:929px;top:763px;color:#d4d5d7;font-size:12.5px">ship</div><div class="t" style="left:858px;top:797px;color:#d4d5d7">Url</div><div class="abs" style="left:920px;top:790px;width:396px;height:27px;border:1px solid #45484d"></div><div class="t" style="left:929px;top:797px;color:#6f7276;font-size:12.5px">/ship</div><div class="t" style="left:858px;top:831px;color:#d4d5d7">Position</div><div class="t" style="left:923px;top:831px;color:#d4d5d7">X</div><div class="abs" style="left:935px;top:823px;width:114px;height:27px;border:1px solid #45484d"></div><div class="t" style="left:935px;top:831px;width:105px;text-align:right;color:#d4d5d7">360</div><div class="t" style="left:1057px;top:831px;color:#d4d5d7">Y</div><div class="abs" style="left:1069px;top:823px;width:114px;height:27px;border:1px solid #45484d"></div><div class="t" style="left:1069px;top:831px;width:105px;text-align:right;color:#d4d5d7">127</div><div class="t" style="left:1190px;top:831px;color:#d4d5d7">Z</div><div class="abs" style="left:1202px;top:823px;width:114px;height:27px;border:1px solid #45484d"></div><div class="t" style="left:1202px;top:831px;width:105px;text-align:right;color:#d4d5d7">0.2</div><div class="t" style="left:858px;top:865px;color:#d4d5d7">Rotation</div><div class="t" style="left:923px;top:865px;color:#d4d5d7">X</div><div class="abs" style="left:935px;top:857px;width:114px;height:27px;border:1px solid #45484d"></div><div class="t" style="left:935px;top:865px;width:105px;text-align:right;color:#d4d5d7">0</div><div class="t" style="left:1057px;top:865px;color:#d4d5d7">Y</div><div class="abs" style="left:1069px;top:857px;width:114px;height:27px;border:1px solid #45484d"></div><div class="t" style="left:1069px;top:865px;width:105px;text-align:right;color:#d4d5d7">0</div><div class="t" style="left:1190px;top:865px;color:#d4d5d7">Z</div><div class="abs" style="left:1202px;top:857px;width:114px;height:27px;border:1px solid #45484d"></div><div class="t" style="left:1202px;top:865px;width:105px;text-align:right;color:#d4d5d7">0</div><div class="t" style="left:858px;top:899px;color:#d4d5d7">Scale</div><div class="t" style="left:923px;top:899px;color:#d4d5d7">X</div><div class="abs" style="left:935px;top:891px;width:114px;height:27px;border:1px solid #45484d"></div><div class="t" style="left:935px;top:899px;width:105px;text-align:right;color:#d4d5d7">1</div><div class="t" style="left:1057px;top:899px;color:#d4d5d7">Y</div><div class="abs" style="left:1069px;top:891px;width:114px;height:27px;border:1px solid #45484d"></div><div class="t" style="left:1069px;top:899px;width:105px;text-align:right;color:#d4d5d7">1</div><div class="t" style="left:1190px;top:899px;color:#d4d5d7">Z</div><div class="abs" style="left:1202px;top:891px;width:114px;height:27px;border:1px solid #45484d"></div><div class="t" style="left:1202px;top:899px;width:105px;text-align:right;color:#d4d5d7">1</div><div class="abs" style="left:611px;top:62px;width:200px;height:40px;border-radius:20px;background:#393c43"></div><div class="abs" style="left:616px;top:67px;width:30px;height:30px;border-radius:15px;background:#2c2e33"></div><svg class="abs" style="left:623px;top:74px" width="16" height="16" viewBox="0 0 16 16"><rect x="5.5" y="5.5" width="5" height="5" fill="#c3c6cc"/><path d="M8,1 V5 M8,11 V15 M1,8 H5 M11,8 H15" stroke="#c3c6cc" stroke-width="1"/><path d="M8,0.5 L6.3,2.6 H9.7 Z M8,15.5 L6.3,13.4 H9.7 Z M0.5,8 L2.6,6.3 V9.7 Z M15.5,8 L13.4,6.3 V9.7 Z" fill="#c3c6cc"/></svg><svg class="abs" style="left:663px;top:74px" width="16" height="16" viewBox="0 0 16 16"><path d="M11.5,2.6 A6.6,6.6 0 1 0 14.3,6.5" stroke="#c3c6cc" stroke-width="1.1" fill="none"/><path d="M8,5 L11,8 L8,11 L5,8 Z" fill="#c3c6cc"/><path d="M9.5,6.5 L14.5,1.5 M14.8,1.2 L11.8,1.6 L14.4,4.2 Z" stroke="#c3c6cc" stroke-width="1.1" fill="#c3c6cc"/></svg><svg class="abs" style="left:703px;top:74px" width="16" height="16" viewBox="0 0 16 16"><rect x="1" y="8" width="6.5" height="7" fill="#c3c6cc"/><path d="M1,6 V1 H6 M10,15 H15 V10" stroke="#c3c6cc" stroke-width="1.1" fill="none"/><path d="M9,7 L14.5,1.5" stroke="#c3c6cc" stroke-width="1.1"/><path d="M15,1 L10.8,1.4 L14.6,5.2 Z" fill="#c3c6cc"/></svg><svg class="abs" style="left:743px;top:74px" width="16" height="16" viewBox="0 0 16 16"><path d="M1,3.7 L7.5,1 L14,3.7 L7.5,5.6 Z M1,3.7 L4.5,13.8 H10.5 L14,3.7 M7.5,5.6 V13.8" stroke="#c3c6cc" stroke-width="1.15" fill="none" stroke-linejoin="round"/></svg><svg class="abs" style="left:782px;top:74px" width="17" height="16" viewBox="0 0 17 16"><path d="M1.6,7.9 C3.5,2.2 12.5,1.8 15,7.9 C12.5,13.6 3.5,13.6 1.6,7.9 Z" fill="#c3c6cc"/><circle cx="8.3" cy="7.9" r="3.1" fill="#393c43"/><circle cx="7.4" cy="6.9" r="1.1" fill="#c3c6cc"/><path d="M10.2,10.6 H16.4 L13.3,14.2 Z" fill="#c3c6cc" stroke="#393c43" stroke-width="0.9"/></svg>
</body></html>
